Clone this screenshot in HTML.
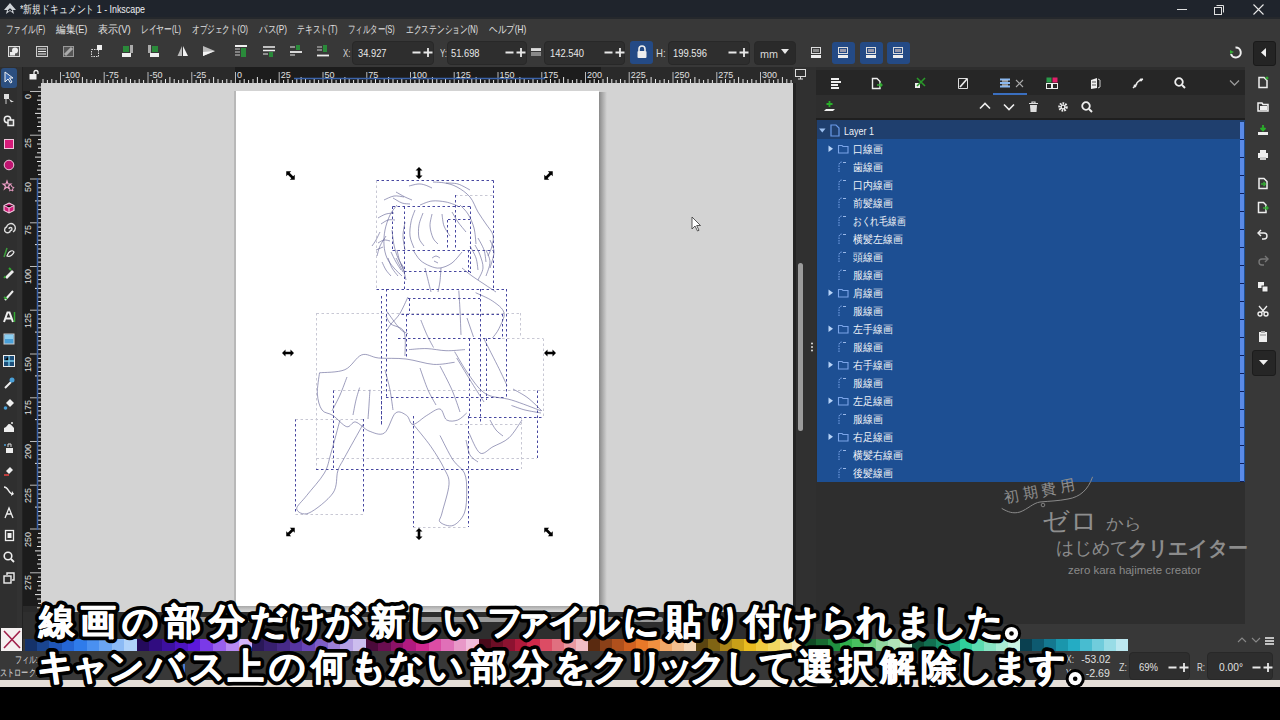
<!DOCTYPE html><html><head><meta charset="utf-8"><style>
*{box-sizing:border-box;margin:0;padding:0}
html,body{width:1280px;height:720px;overflow:hidden;background:#000}
body{position:relative;font-family:"Liberation Sans",sans-serif;color:#ddd}
.a{position:absolute}
.t{position:absolute;white-space:nowrap;line-height:1}
.inp{position:absolute;background:#2e2e2e;border:1px solid #282828;border-radius:4px}
.bbtn{position:absolute;background:#244a85;border-radius:3px}
.sw{position:absolute;top:639px;height:12px}
svg{position:absolute;overflow:visible}
.sub{position:absolute;font-size:38px;font-weight:bold;color:#fff;white-space:nowrap;-webkit-text-stroke:7px #000;paint-order:stroke fill;line-height:1}
</style></head><body>
<div class="a" style="left:0px;top:0px;width:1280px;height:17px;background:#1f242c;"></div>
<div class="a" style="left:0px;top:17px;width:1280px;height:2px;background:#25282c;"></div>
<div class="a" style="left:0px;top:19px;width:1280px;height:48px;background:#383838;"></div>
<div class="a" style="left:0px;top:67px;width:23px;height:572px;background:#2f2f2f;"></div>
<div class="a" style="left:17px;top:67px;width:6px;height:572px;background:#323232;"></div>
<div class="a" style="left:23px;top:67px;width:770px;height:16px;background:#2a2a2a;"></div>
<div class="a" style="left:235px;top:67px;width:366px;height:16px;background:#1c1c1c;"></div>
<div class="a" style="left:23px;top:83px;width:18px;height:529px;background:#2a2a2a;"></div>
<div class="a" style="left:23px;top:91px;width:18px;height:515px;background:#1c1c1c;"></div>
<div class="a" style="left:41px;top:83px;width:752px;height:529px;background:#d3d3d3;"></div>
<div class="a" style="left:234px;top:91px;width:2px;height:515px;background:#b8b8b8;"></div>
<div class="a" style="left:599px;top:92px;width:8px;height:519px;background:linear-gradient(90deg,#8a8a8a,#d3d3d3);"></div>
<div class="a" style="left:236px;top:606px;width:371px;height:5px;background:linear-gradient(180deg,#a8a8a8,#d3d3d3);"></div>
<div class="a" style="left:236px;top:91px;width:363px;height:515px;background:#ffffff;"></div>
<div class="a" style="left:23px;top:612px;width:793px;height:27px;background:#2e2e2e;"></div>
<div class="a" style="left:196px;top:617px;width:467px;height:5px;background:#9a9a9a;border-radius:3px"></div>
<div class="a" style="left:793px;top:67px;width:23px;height:572px;background:#303030;"></div>
<div class="a" style="left:793px;top:83px;width:3px;height:529px;background:#232323;"></div>
<div class="a" style="left:798px;top:263px;width:5px;height:168px;background:#9c9c9c;border-radius:3px"></div>
<div class="a" style="left:816px;top:67px;width:430px;height:557px;background:#2e2e2e;"></div>
<div class="a" style="left:816px;top:70px;width:429px;height:25px;background:#262626;"></div>
<div class="a" style="left:816px;top:95px;width:429px;height:23px;background:#2e2e2e;"></div>
<div class="a" style="left:816px;top:118px;width:429px;height:2px;background:#1f1f1f;"></div>
<div class="a" style="left:817px;top:120px;width:428px;height:19px;background:#1f3f6e;"></div>
<div class="a" style="left:817px;top:139px;width:428px;height:343px;background:#1d4f93;"></div>
<div class="a" style="left:1240px;top:122px;width:4px;height:360px;background:#5a8ae8;"></div>
<div class="a" style="left:816px;top:482px;width:429px;height:142px;background:#2e2e2e;"></div>
<div class="a" style="left:1245px;top:67px;width:35px;height:572px;background:#383838;"></div>
<div class="a" style="left:816px;top:624px;width:429px;height:15px;background:#383838;"></div>
<div class="a" style="left:0px;top:639px;width:1280px;height:12px;background:#383838;"></div>
<div class="a" style="left:0px;top:651px;width:1280px;height:29px;background:#383838;"></div>
<div class="a" style="left:0px;top:680px;width:1280px;height:7px;background:#e6dfd8;"></div>
<div class="a" style="left:0px;top:687px;width:1280px;height:33px;background:#000000;"></div>
<div class="sw" style="left:24.50px;width:12.87px;background:#15326a"></div>
<div class="sw" style="left:36.97px;width:12.87px;background:#1a4590"></div>
<div class="sw" style="left:49.43px;width:12.87px;background:#1f55b5"></div>
<div class="sw" style="left:61.90px;width:12.87px;background:#2566d5"></div>
<div class="sw" style="left:74.37px;width:12.87px;background:#2f7bea"></div>
<div class="sw" style="left:86.83px;width:12.87px;background:#4a90f0"></div>
<div class="sw" style="left:99.30px;width:12.87px;background:#6aa5f2"></div>
<div class="sw" style="left:111.77px;width:12.87px;background:#8cbaf5"></div>
<div class="sw" style="left:124.23px;width:12.87px;background:#b0d2fa"></div>
<div class="sw" style="left:136.70px;width:13.16px;background:#240a5c"></div>
<div class="sw" style="left:149.46px;width:13.16px;background:#300c80"></div>
<div class="sw" style="left:162.21px;width:13.16px;background:#3d10a0"></div>
<div class="sw" style="left:174.97px;width:13.16px;background:#4c14c0"></div>
<div class="sw" style="left:187.72px;width:13.16px;background:#5c18dc"></div>
<div class="sw" style="left:200.48px;width:13.16px;background:#7a3ae8"></div>
<div class="sw" style="left:213.23px;width:13.16px;background:#9a60ee"></div>
<div class="sw" style="left:225.99px;width:13.16px;background:#b88af2"></div>
<div class="sw" style="left:238.74px;width:13.16px;background:#d2b4f8"></div>
<div class="sw" style="left:251.50px;width:13.09px;background:#2a1858"></div>
<div class="sw" style="left:264.19px;width:13.09px;background:#382070"></div>
<div class="sw" style="left:276.88px;width:13.09px;background:#472a88"></div>
<div class="sw" style="left:289.57px;width:13.09px;background:#5635a0"></div>
<div class="sw" style="left:302.26px;width:13.09px;background:#6845b8"></div>
<div class="sw" style="left:314.94px;width:13.09px;background:#7e5ec8"></div>
<div class="sw" style="left:327.63px;width:13.09px;background:#9a7ed6"></div>
<div class="sw" style="left:340.32px;width:13.09px;background:#b49ee2"></div>
<div class="sw" style="left:353.01px;width:13.09px;background:#ccbdee"></div>
<div class="sw" style="left:365.70px;width:12.99px;background:#4a0a3a"></div>
<div class="sw" style="left:378.29px;width:12.99px;background:#6a0e50"></div>
<div class="sw" style="left:390.88px;width:12.99px;background:#8c1268"></div>
<div class="sw" style="left:403.47px;width:12.99px;background:#b01a80"></div>
<div class="sw" style="left:416.06px;width:12.99px;background:#d02890"></div>
<div class="sw" style="left:428.64px;width:12.99px;background:#dc4ca4"></div>
<div class="sw" style="left:441.23px;width:12.99px;background:#e070b8"></div>
<div class="sw" style="left:453.82px;width:12.99px;background:#e898c8"></div>
<div class="sw" style="left:466.41px;width:12.99px;background:#f0bcdc"></div>
<div class="sw" style="left:479.00px;width:12.51px;background:#4a0a1a"></div>
<div class="sw" style="left:491.11px;width:12.51px;background:#6c0e26"></div>
<div class="sw" style="left:503.22px;width:12.51px;background:#8c1230"></div>
<div class="sw" style="left:515.33px;width:12.51px;background:#b01a3c"></div>
<div class="sw" style="left:527.44px;width:12.51px;background:#d0284a"></div>
<div class="sw" style="left:539.56px;width:12.51px;background:#dc4c64"></div>
<div class="sw" style="left:551.67px;width:12.51px;background:#e07080"></div>
<div class="sw" style="left:563.78px;width:12.51px;background:#e898a0"></div>
<div class="sw" style="left:575.89px;width:12.51px;background:#f0bcc4"></div>
<div class="sw" style="left:588.00px;width:12.40px;background:#5a2a10"></div>
<div class="sw" style="left:600.00px;width:12.40px;background:#8a4018"></div>
<div class="sw" style="left:612.00px;width:12.40px;background:#b0501c"></div>
<div class="sw" style="left:624.00px;width:12.40px;background:#d06020"></div>
<div class="sw" style="left:636.00px;width:12.40px;background:#e87828"></div>
<div class="sw" style="left:648.00px;width:12.40px;background:#f09040"></div>
<div class="sw" style="left:660.00px;width:12.40px;background:#f0a868"></div>
<div class="sw" style="left:672.00px;width:12.40px;background:#f2c090"></div>
<div class="sw" style="left:684.00px;width:12.40px;background:#f5d8b8"></div>
<div class="sw" style="left:696.00px;width:12.40px;background:#5a4410"></div>
<div class="sw" style="left:708.00px;width:12.40px;background:#806414"></div>
<div class="sw" style="left:720.00px;width:12.40px;background:#a88418"></div>
<div class="sw" style="left:732.00px;width:12.40px;background:#c8a018"></div>
<div class="sw" style="left:744.00px;width:12.40px;background:#e8bc20"></div>
<div class="sw" style="left:756.00px;width:12.40px;background:#f0cc40"></div>
<div class="sw" style="left:768.00px;width:12.40px;background:#f2d860"></div>
<div class="sw" style="left:780.00px;width:12.40px;background:#f5e090"></div>
<div class="sw" style="left:792.00px;width:12.40px;background:#f8ecc0"></div>
<div class="sw" style="left:804.00px;width:12.40px;background:#104a24"></div>
<div class="sw" style="left:816.00px;width:12.40px;background:#186a30"></div>
<div class="sw" style="left:828.00px;width:12.40px;background:#209040"></div>
<div class="sw" style="left:840.00px;width:12.40px;background:#30b04c"></div>
<div class="sw" style="left:852.00px;width:12.40px;background:#48c060"></div>
<div class="sw" style="left:864.00px;width:12.40px;background:#70cc80"></div>
<div class="sw" style="left:876.00px;width:12.40px;background:#90d8a0"></div>
<div class="sw" style="left:888.00px;width:12.40px;background:#b0e4b8"></div>
<div class="sw" style="left:900.00px;width:12.40px;background:#d0f0d8"></div>
<div class="sw" style="left:912.00px;width:12.40px;background:#0e5038"></div>
<div class="sw" style="left:924.00px;width:12.40px;background:#127050"></div>
<div class="sw" style="left:936.00px;width:12.40px;background:#18906a"></div>
<div class="sw" style="left:948.00px;width:12.40px;background:#20b084"></div>
<div class="sw" style="left:960.00px;width:12.40px;background:#30d09c"></div>
<div class="sw" style="left:972.00px;width:12.40px;background:#5cdcb0"></div>
<div class="sw" style="left:984.00px;width:12.40px;background:#88e4c4"></div>
<div class="sw" style="left:996.00px;width:12.40px;background:#a8ecd4"></div>
<div class="sw" style="left:1008.00px;width:12.40px;background:#c8f4e4"></div>
<div class="sw" style="left:1020.00px;width:12.34px;background:#0a4050"></div>
<div class="sw" style="left:1031.94px;width:12.34px;background:#0e5a70"></div>
<div class="sw" style="left:1043.89px;width:12.34px;background:#147890"></div>
<div class="sw" style="left:1055.83px;width:12.34px;background:#1a96ac"></div>
<div class="sw" style="left:1067.78px;width:12.34px;background:#24acc4"></div>
<div class="sw" style="left:1079.72px;width:12.34px;background:#48bcd0"></div>
<div class="sw" style="left:1091.67px;width:12.34px;background:#70ccdc"></div>
<div class="sw" style="left:1103.61px;width:12.34px;background:#98dce6"></div>
<div class="sw" style="left:1115.56px;width:12.34px;background:#bce8f0"></div>
<div class="a" style="left:1px;top:628px;width:22px;height:23px;background:#f4f0f0"></div>
<svg style="left:1px;top:628px" width="22" height="23"><path d="M3 3L19 20M19 3L3 20" stroke="#a0204a" stroke-width="1.6"/></svg>
<svg style="left:3px;top:2px" width="14" height="14"><path d="M7 1L13 8L10 8L11 12L7 9L3 12L4 8L1 8Z" fill="#cfd3d8"/><path d="M5 9L7 7L9 9" stroke="#1d222a" stroke-width="1.2" fill="none"/></svg>
<div class="a" style="left:1177px;top:9px;width:10px;height:1px;background:#e0e0e0"></div>
<svg style="left:1213px;top:4px" width="12" height="11"><rect x="1.5" y="3.5" width="7" height="7" fill="none" stroke="#e0e0e0"/><path d="M3.5 1.5H10.5V8.5" fill="none" stroke="#e0e0e0"/></svg>
<svg style="left:1253px;top:4px" width="11" height="11"><path d="M0.5 0.5L10.5 10.5M10.5 0.5L0.5 10.5" stroke="#e8e8e8" stroke-width="1.1"/></svg>

<svg style="left:8px;top:46px" width="13" height="12"><rect x="0.5" y="0.5" width="11" height="10" fill="#555" stroke="#ddd"/><circle cx="7" cy="4.5" r="3" fill="#eee"/><rect x="2" y="6" width="5" height="3.5" fill="#eee"/></svg>
<svg style="left:36px;top:46px" width="13" height="12"><rect x="0.5" y="0.5" width="11" height="10" fill="#444" stroke="#ccc"/><path d="M2 3H10M2 5.5H10M2 8H10" stroke="#eee" stroke-width="1.2"/></svg>
<svg style="left:63px;top:46px" width="12" height="12"><rect x="0.5" y="0.5" width="10" height="10" fill="#555" stroke="#999"/><path d="M2 9L9 2" stroke="#aaa" stroke-width="3"/></svg>
<svg style="left:91px;top:45px" width="13" height="13"><rect x="0.5" y="4.5" width="7" height="7" fill="none" stroke="#ddd" stroke-dasharray="1.5 1"/><rect x="6" y="0" width="5" height="5" fill="#f0f0f0"/></svg>
<svg style="left:121px;top:45px" width="14" height="13"><rect x="2" y="1" width="6" height="6" fill="#2a8a3a"/><rect x="9" y="0" width="3" height="8" fill="#aaa"/><rect x="1" y="8" width="9" height="4" fill="#f0f0f0"/></svg>
<svg style="left:146px;top:45px" width="14" height="13"><rect x="2" y="0" width="3" height="8" fill="#aaa"/><rect x="6" y="1" width="6" height="6" fill="#2a8a3a"/><rect x="4" y="8" width="9" height="4" fill="#f0f0f0"/></svg>
<svg style="left:177px;top:45px" width="12" height="13"><path d="M5 1L0.5 11H5Z" fill="#bbb"/><path d="M6 1L11 11H6Z" fill="#f4f4f4"/></svg>
<svg style="left:202px;top:45px" width="14" height="13"><path d="M1 1L13 6L1 11Z" fill="#bbb"/><path d="M1 7L13 6L1 11Z" fill="#f4f4f4"/></svg>
<svg style="left:235px;top:45px" width="13" height="13"><rect x="0" y="0" width="12" height="2" fill="#f0f0f0"/><path d="M0 4H5M0 7H5M0 10H5" stroke="#ccc" stroke-width="1.2"/><rect x="6" y="3" width="5" height="9" fill="#2a8a3a"/></svg>
<svg style="left:263px;top:45px" width="13" height="13"><path d="M0 2H12M0 5.5H12" stroke="#eee" stroke-width="1.6"/><path d="M0 9H5" stroke="#ccc" stroke-width="1.2"/><rect x="6" y="7" width="4" height="5" fill="#2a8a3a"/></svg>
<svg style="left:290px;top:45px" width="13" height="13"><path d="M0 2H5" stroke="#ccc" stroke-width="1.2"/><rect x="6" y="0" width="4" height="5" fill="#2a8a3a"/><path d="M0 7H12" stroke="#eee" stroke-width="1.8"/><path d="M0 10H5" stroke="#ccc" stroke-width="1.2"/></svg>
<svg style="left:317px;top:45px" width="13" height="13"><path d="M0 2H5M0 5H5" stroke="#ccc" stroke-width="1.2"/><rect x="6" y="0" width="4" height="7" fill="#2a8a3a"/><path d="M0 10.5H12" stroke="#eee" stroke-width="1.8"/></svg>

<div class="inp" style="left:352px;top:41px;width:82px;height:24px"></div>
<div class="inp" style="left:447px;top:41px;width:80px;height:24px"></div>
<div class="inp" style="left:544px;top:41px;width:81px;height:24px"></div>
<div class="inp" style="left:668px;top:41px;width:82px;height:24px"></div>
<div class="inp" style="left:754px;top:41px;width:42px;height:24px;background:#2a2a2a"></div>
<div class="bbtn" style="left:630px;top:41px;width:23px;height:23px"></div>
<svg style="left:636px;top:45px" width="12" height="14"><path d="M3 6V4A3 3 0 0 1 9 4V6" fill="none" stroke="#eee" stroke-width="1.6"/><rect x="1.5" y="6" width="9" height="7" rx="1" fill="#eee"/></svg>
<svg style="left:781px;top:49px" width="9" height="6"><path d="M0 0H8L4 5Z" fill="#e8e8e8"/></svg>
<svg style="left:412px;top:47px" width="22" height="11"><path d="M0.5 5.5H8.5M11.5 5.5H20.5M16 1V10" stroke="#e8e8e8" stroke-width="1.8"/></svg>
<svg style="left:505px;top:47px" width="22" height="11"><path d="M0.5 5.5H8.5M11.5 5.5H20.5M16 1V10" stroke="#e8e8e8" stroke-width="1.8"/></svg>
<svg style="left:604px;top:47px" width="22" height="11"><path d="M0.5 5.5H8.5M11.5 5.5H20.5M16 1V10" stroke="#e8e8e8" stroke-width="1.8"/></svg>
<svg style="left:727.5px;top:47px" width="22" height="11"><path d="M0.5 5.5H8.5M11.5 5.5H20.5M16 1V10" stroke="#e8e8e8" stroke-width="1.8"/></svg>
<svg style="left:531px;top:48px" width="11" height="9"><rect x="0" y="0" width="10" height="3" fill="#ccc"/><rect x="0" y="4" width="10" height="4" fill="#888"/><path d="M0 2H10" stroke="#eee"/></svg>
<svg style="left:811px;top:47px" width="11" height="12"><rect x="0.5" y="0.5" width="9" height="6" fill="none" stroke="#ddd"/><rect x="2" y="2" width="6" height="3" fill="#888"/><rect x="0" y="8" width="10" height="3" fill="#eee"/></svg>
<div class="bbtn" style="left:832px;top:42px;width:23px;height:22px"></div>
<svg style="left:838px;top:47px" width="11" height="12"><rect x="0.5" y="0.5" width="9" height="6" fill="none" stroke="#ddd"/><rect x="2" y="2" width="6" height="3" fill="#99a"/><rect x="0" y="8" width="10" height="3" fill="#eee"/></svg>
<div class="bbtn" style="left:860px;top:42px;width:23px;height:22px"></div>
<svg style="left:866px;top:47px" width="11" height="12"><rect x="0.5" y="0.5" width="9" height="6" fill="none" stroke="#ddd"/><rect x="2" y="2" width="6" height="3" fill="#99a"/><rect x="0" y="8" width="10" height="3" fill="#eee"/></svg>
<div class="bbtn" style="left:887px;top:42px;width:23px;height:22px"></div>
<svg style="left:893px;top:47px" width="11" height="12"><rect x="0.5" y="0.5" width="9" height="6" fill="none" stroke="#ddd"/><rect x="2" y="2" width="6" height="3" fill="#99a"/><rect x="0" y="8" width="10" height="3" fill="#eee"/></svg>
<svg style="left:1229px;top:46px" width="14" height="13"><path d="M6.5 1.5A5 5 0 1 1 2 8" fill="none" stroke="#eee" stroke-width="2"/><path d="M1 4L5 6L1 8Z" fill="#3a3"/></svg>
<div class="a" style="left:1253px;top:41px;width:23px;height:25px;background:#242424;border:1px solid #1a1a1a;border-radius:3px"></div>
<svg style="left:1260px;top:48px" width="8" height="10"><path d="M6 0V9L1 4.5Z" fill="#f0f0f0"/></svg>
<div class="a" style="left:1px;top:68px;width:16px;height:20px;background:#2c4f7f;border-radius:3px"></div>
<div class="a" style="left:22px;top:67px;width:1px;height:584px;background:#222"></div>
<svg style="left:3px;top:71px" width="13" height="13"><path d="M2 1L2 11L5 8L7.5 12L9 11L6.5 7L10 7Z" fill="#3b6ab0" stroke="#f0f0f0" stroke-width="1"/></svg>
<svg style="left:3px;top:93px" width="13" height="13"><rect x="1" y="1" width="5" height="5" fill="#ddd"/><path d="M6 6L11 9L8 9L9 11" fill="#ddd"/><path d="M3 6V11" stroke="#ccc"/></svg>
<svg style="left:3px;top:115px" width="13" height="13"><circle cx="4.5" cy="4.5" r="3.2" fill="none" stroke="#eee" stroke-width="1.5"/><rect x="5" y="5" width="5.5" height="5.5" fill="#444" stroke="#eee" stroke-width="1.5"/></svg>
<svg style="left:3px;top:138px" width="13" height="13"><rect x="1.5" y="1.5" width="9" height="9" fill="#d81b7a" stroke="#f0c8dc" stroke-width="1"/></svg>
<svg style="left:3px;top:159px" width="13" height="13"><circle cx="6" cy="6" r="4.8" fill="#c01470" stroke="#f0c8dc" stroke-width="1"/></svg>
<svg style="left:3px;top:180px" width="13" height="13"><path d="M4 1L5 4L8 4L5.5 6L6.5 9L4 7L1.5 9L2.5 6L0 4L3 4Z" fill="none" stroke="#f0a0c8" stroke-width="1.1"/><path d="M8 5L9 7L11 7.5L9.5 9L10 11L8 10L6 11" fill="none" stroke="#f0a0c8" stroke-width="1"/></svg>
<svg style="left:3px;top:202px" width="13" height="13"><path d="M6 1L11 3.5V8.5L6 11L1 8.5V3.5Z" fill="#d01a78" stroke="#f4d0e4" stroke-width="1.1"/><path d="M1 3.5L6 6L11 3.5M6 6V11" stroke="#f4d0e4" stroke-width="1"/></svg>
<svg style="left:3px;top:223px" width="13" height="13"><path d="M6 6A1.5 1.5 0 1 1 7.5 7.5A3 3 0 1 1 3.5 4A4.5 4.5 0 1 1 10 9" fill="none" stroke="#ddd" stroke-width="1.4"/></svg>
<svg style="left:3px;top:247px" width="13" height="13"><path d="M1 10L4 1" stroke="#3fa03f" stroke-width="1.5"/><path d="M4 9C6 3 10 3 11 5C10 8 7 10 4 9Z" fill="none" stroke="#eee" stroke-width="1.2"/></svg>
<svg style="left:3px;top:267px" width="13" height="13"><path d="M2 10L9 3L11 5L4 12Z" fill="#eee"/><path d="M1 11L2.5 9" stroke="#3a3" stroke-width="1.5"/><path d="M6 1L8 3" stroke="#3a3" stroke-width="2"/></svg>
<svg style="left:3px;top:289px" width="13" height="13"><path d="M2 11L10 2" stroke="#eee" stroke-width="2"/><path d="M1 8L4 10" stroke="#3a3" stroke-width="2"/></svg>
<svg style="left:3px;top:311px" width="13" height="13"><path d="M1 11L4.5 1.5H6.5L10 11M2.8 7.5H8.3" fill="none" stroke="#f0f0f0" stroke-width="2"/><path d="M11.5 1V11" stroke="#3a3" stroke-width="1.5"/></svg>
<svg style="left:3px;top:333px" width="13" height="13"><rect x="1" y="1" width="10" height="10" fill="#4aa0d8" stroke="#ccc"/><rect x="2" y="2" width="8" height="4" fill="#8ccff0"/></svg>
<svg style="left:3px;top:355px" width="13" height="13"><rect x="0.5" y="0.5" width="11" height="11" fill="#1d4f7a" stroke="#eee"/><path d="M6 1V6H1M6 6H11M6 6V11" stroke="#7ad0f0" stroke-width="1.3"/></svg>
<svg style="left:3px;top:377px" width="13" height="13"><path d="M2 11L8 5" stroke="#eee" stroke-width="2"/><circle cx="9" cy="3" r="2.5" fill="#4aa0d8"/></svg>
<svg style="left:3px;top:398px" width="13" height="13"><path d="M3 5L7 1L11 5L7 9Z" fill="#eee"/><circle cx="2.5" cy="10" r="1.8" fill="#4aa0d8"/></svg>
<svg style="left:3px;top:421px" width="13" height="13"><path d="M1 11H11V7C9 5 8 3 6 3C5 3 4 5 3 6L1 7Z" fill="#eee"/><circle cx="9" cy="2" r="1" fill="#eee"/></svg>
<svg style="left:3px;top:442px" width="13" height="13"><path d="M3 11H10V6H3Z" fill="#eee"/><path d="M5 5V2H8V5" stroke="#ddd" fill="none"/><circle cx="2" cy="3" r="1" fill="#4aa0d8"/></svg>
<svg style="left:3px;top:464px" width="13" height="13"><path d="M3 7L7 3L10 6L6 10Z" fill="#eee"/><path d="M1 11H6" stroke="#e44" stroke-width="1.5"/></svg>
<svg style="left:3px;top:485px" width="13" height="13"><path d="M1 2C6 2 5 9 10 9" fill="none" stroke="#eee" stroke-width="1.5"/><path d="M9 6L11 9L8 11Z" fill="#eee"/></svg>
<svg style="left:3px;top:507px" width="13" height="13"><path d="M2 11L6 1L10 11M4 7H8" fill="none" stroke="#eee" stroke-width="1.3"/></svg>
<svg style="left:3px;top:529px" width="13" height="13"><rect x="2.5" y="1.5" width="8" height="10" fill="none" stroke="#eee" stroke-width="1.3"/><rect x="4.5" y="4" width="4" height="5" fill="#eee"/></svg>
<svg style="left:3px;top:551px" width="13" height="13"><circle cx="5" cy="5" r="3.8" fill="none" stroke="#eee" stroke-width="1.6"/><path d="M8 8L11 11" stroke="#eee" stroke-width="1.8"/></svg>
<svg style="left:3px;top:572px" width="13" height="13"><rect x="1" y="4" width="7" height="7" fill="none" stroke="#eee" stroke-width="1.4"/><path d="M4 3V1H11V8H9" fill="none" stroke="#eee" stroke-width="1.4"/></svg>
<svg style="left:29px;top:70px" width="11" height="10"><rect x="0.5" y="4" width="7" height="5.5" fill="#f0f0f0"/><path d="M5 4V2.5A2 2 0 0 1 9 2.5V4" fill="none" stroke="#f0f0f0" stroke-width="1.3"/></svg>
<svg style="left:0;top:0" width="1280" height="720"><path d="M43.0 79V83" stroke="#e8e8e8" stroke-width="1"/><path d="M47.4 80V83" stroke="#e8e8e8" stroke-width="1"/><path d="M51.8 79V83" stroke="#e8e8e8" stroke-width="1"/><path d="M56.1 80V83" stroke="#e8e8e8" stroke-width="1"/><path d="M60.5 72V83" stroke="#bbbbbb" stroke-width="1"/><path d="M64.9 80V83" stroke="#e8e8e8" stroke-width="1"/><path d="M69.2 79V83" stroke="#e8e8e8" stroke-width="1"/><path d="M73.6 80V83" stroke="#e8e8e8" stroke-width="1"/><path d="M78.0 79V83" stroke="#e8e8e8" stroke-width="1"/><path d="M82.4 77V83" stroke="#e8e8e8" stroke-width="1"/><path d="M86.8 79V83" stroke="#e8e8e8" stroke-width="1"/><path d="M91.1 80V83" stroke="#e8e8e8" stroke-width="1"/><path d="M95.5 79V83" stroke="#e8e8e8" stroke-width="1"/><path d="M99.9 80V83" stroke="#e8e8e8" stroke-width="1"/><path d="M104.2 72V83" stroke="#bbbbbb" stroke-width="1"/><path d="M108.6 80V83" stroke="#e8e8e8" stroke-width="1"/><path d="M113.0 79V83" stroke="#e8e8e8" stroke-width="1"/><path d="M117.4 80V83" stroke="#e8e8e8" stroke-width="1"/><path d="M121.8 79V83" stroke="#e8e8e8" stroke-width="1"/><path d="M126.1 77V83" stroke="#e8e8e8" stroke-width="1"/><path d="M130.5 79V83" stroke="#e8e8e8" stroke-width="1"/><path d="M134.9 80V83" stroke="#e8e8e8" stroke-width="1"/><path d="M139.2 79V83" stroke="#e8e8e8" stroke-width="1"/><path d="M143.6 80V83" stroke="#e8e8e8" stroke-width="1"/><path d="M148.0 72V83" stroke="#bbbbbb" stroke-width="1"/><path d="M152.4 80V83" stroke="#e8e8e8" stroke-width="1"/><path d="M156.8 79V83" stroke="#e8e8e8" stroke-width="1"/><path d="M161.1 80V83" stroke="#e8e8e8" stroke-width="1"/><path d="M165.5 79V83" stroke="#e8e8e8" stroke-width="1"/><path d="M169.9 77V83" stroke="#e8e8e8" stroke-width="1"/><path d="M174.2 79V83" stroke="#e8e8e8" stroke-width="1"/><path d="M178.6 80V83" stroke="#e8e8e8" stroke-width="1"/><path d="M183.0 79V83" stroke="#e8e8e8" stroke-width="1"/><path d="M187.4 80V83" stroke="#e8e8e8" stroke-width="1"/><path d="M191.8 72V83" stroke="#bbbbbb" stroke-width="1"/><path d="M196.1 80V83" stroke="#e8e8e8" stroke-width="1"/><path d="M200.5 79V83" stroke="#e8e8e8" stroke-width="1"/><path d="M204.9 80V83" stroke="#e8e8e8" stroke-width="1"/><path d="M209.2 79V83" stroke="#e8e8e8" stroke-width="1"/><path d="M213.6 77V83" stroke="#e8e8e8" stroke-width="1"/><path d="M218.0 79V83" stroke="#e8e8e8" stroke-width="1"/><path d="M222.4 80V83" stroke="#e8e8e8" stroke-width="1"/><path d="M226.8 79V83" stroke="#e8e8e8" stroke-width="1"/><path d="M231.1 80V83" stroke="#e8e8e8" stroke-width="1"/><path d="M235.5 72V83" stroke="#bbbbbb" stroke-width="1"/><path d="M239.9 80V83" stroke="#e8e8e8" stroke-width="1"/><path d="M244.2 79V83" stroke="#e8e8e8" stroke-width="1"/><path d="M248.6 80V83" stroke="#e8e8e8" stroke-width="1"/><path d="M253.0 79V83" stroke="#e8e8e8" stroke-width="1"/><path d="M257.4 77V83" stroke="#e8e8e8" stroke-width="1"/><path d="M261.8 79V83" stroke="#e8e8e8" stroke-width="1"/><path d="M266.1 80V83" stroke="#e8e8e8" stroke-width="1"/><path d="M270.5 79V83" stroke="#e8e8e8" stroke-width="1"/><path d="M274.9 80V83" stroke="#e8e8e8" stroke-width="1"/><path d="M279.2 72V83" stroke="#bbbbbb" stroke-width="1"/><path d="M283.6 80V83" stroke="#e8e8e8" stroke-width="1"/><path d="M288.0 79V83" stroke="#e8e8e8" stroke-width="1"/><path d="M292.4 80V83" stroke="#e8e8e8" stroke-width="1"/><path d="M296.8 79V83" stroke="#e8e8e8" stroke-width="1"/><path d="M301.1 77V83" stroke="#e8e8e8" stroke-width="1"/><path d="M305.5 79V83" stroke="#e8e8e8" stroke-width="1"/><path d="M309.9 80V83" stroke="#e8e8e8" stroke-width="1"/><path d="M314.2 79V83" stroke="#e8e8e8" stroke-width="1"/><path d="M318.6 80V83" stroke="#e8e8e8" stroke-width="1"/><path d="M323.0 72V83" stroke="#bbbbbb" stroke-width="1"/><path d="M327.4 80V83" stroke="#e8e8e8" stroke-width="1"/><path d="M331.8 79V83" stroke="#e8e8e8" stroke-width="1"/><path d="M336.1 80V83" stroke="#e8e8e8" stroke-width="1"/><path d="M340.5 79V83" stroke="#e8e8e8" stroke-width="1"/><path d="M344.9 77V83" stroke="#e8e8e8" stroke-width="1"/><path d="M349.2 79V83" stroke="#e8e8e8" stroke-width="1"/><path d="M353.6 80V83" stroke="#e8e8e8" stroke-width="1"/><path d="M358.0 79V83" stroke="#e8e8e8" stroke-width="1"/><path d="M362.4 80V83" stroke="#e8e8e8" stroke-width="1"/><path d="M366.8 72V83" stroke="#bbbbbb" stroke-width="1"/><path d="M371.1 80V83" stroke="#e8e8e8" stroke-width="1"/><path d="M375.5 79V83" stroke="#e8e8e8" stroke-width="1"/><path d="M379.9 80V83" stroke="#e8e8e8" stroke-width="1"/><path d="M384.2 79V83" stroke="#e8e8e8" stroke-width="1"/><path d="M388.6 77V83" stroke="#e8e8e8" stroke-width="1"/><path d="M393.0 79V83" stroke="#e8e8e8" stroke-width="1"/><path d="M397.4 80V83" stroke="#e8e8e8" stroke-width="1"/><path d="M401.8 79V83" stroke="#e8e8e8" stroke-width="1"/><path d="M406.1 80V83" stroke="#e8e8e8" stroke-width="1"/><path d="M410.5 72V83" stroke="#bbbbbb" stroke-width="1"/><path d="M414.9 80V83" stroke="#e8e8e8" stroke-width="1"/><path d="M419.2 79V83" stroke="#e8e8e8" stroke-width="1"/><path d="M423.6 80V83" stroke="#e8e8e8" stroke-width="1"/><path d="M428.0 79V83" stroke="#e8e8e8" stroke-width="1"/><path d="M432.4 77V83" stroke="#e8e8e8" stroke-width="1"/><path d="M436.8 79V83" stroke="#e8e8e8" stroke-width="1"/><path d="M441.1 80V83" stroke="#e8e8e8" stroke-width="1"/><path d="M445.5 79V83" stroke="#e8e8e8" stroke-width="1"/><path d="M449.9 80V83" stroke="#e8e8e8" stroke-width="1"/><path d="M454.2 72V83" stroke="#bbbbbb" stroke-width="1"/><path d="M458.6 80V83" stroke="#e8e8e8" stroke-width="1"/><path d="M463.0 79V83" stroke="#e8e8e8" stroke-width="1"/><path d="M467.4 80V83" stroke="#e8e8e8" stroke-width="1"/><path d="M471.8 79V83" stroke="#e8e8e8" stroke-width="1"/><path d="M476.1 77V83" stroke="#e8e8e8" stroke-width="1"/><path d="M480.5 79V83" stroke="#e8e8e8" stroke-width="1"/><path d="M484.9 80V83" stroke="#e8e8e8" stroke-width="1"/><path d="M489.2 79V83" stroke="#e8e8e8" stroke-width="1"/><path d="M493.6 80V83" stroke="#e8e8e8" stroke-width="1"/><path d="M498.0 72V83" stroke="#bbbbbb" stroke-width="1"/><path d="M502.4 80V83" stroke="#e8e8e8" stroke-width="1"/><path d="M506.8 79V83" stroke="#e8e8e8" stroke-width="1"/><path d="M511.1 80V83" stroke="#e8e8e8" stroke-width="1"/><path d="M515.5 79V83" stroke="#e8e8e8" stroke-width="1"/><path d="M519.9 77V83" stroke="#e8e8e8" stroke-width="1"/><path d="M524.2 79V83" stroke="#e8e8e8" stroke-width="1"/><path d="M528.6 80V83" stroke="#e8e8e8" stroke-width="1"/><path d="M533.0 79V83" stroke="#e8e8e8" stroke-width="1"/><path d="M537.4 80V83" stroke="#e8e8e8" stroke-width="1"/><path d="M541.8 72V83" stroke="#bbbbbb" stroke-width="1"/><path d="M546.1 80V83" stroke="#e8e8e8" stroke-width="1"/><path d="M550.5 79V83" stroke="#e8e8e8" stroke-width="1"/><path d="M554.9 80V83" stroke="#e8e8e8" stroke-width="1"/><path d="M559.2 79V83" stroke="#e8e8e8" stroke-width="1"/><path d="M563.6 77V83" stroke="#e8e8e8" stroke-width="1"/><path d="M568.0 79V83" stroke="#e8e8e8" stroke-width="1"/><path d="M572.4 80V83" stroke="#e8e8e8" stroke-width="1"/><path d="M576.8 79V83" stroke="#e8e8e8" stroke-width="1"/><path d="M581.1 80V83" stroke="#e8e8e8" stroke-width="1"/><path d="M585.5 72V83" stroke="#bbbbbb" stroke-width="1"/><path d="M589.9 80V83" stroke="#e8e8e8" stroke-width="1"/><path d="M594.2 79V83" stroke="#e8e8e8" stroke-width="1"/><path d="M598.6 80V83" stroke="#e8e8e8" stroke-width="1"/><path d="M603.0 79V83" stroke="#e8e8e8" stroke-width="1"/><path d="M607.4 77V83" stroke="#e8e8e8" stroke-width="1"/><path d="M611.8 79V83" stroke="#e8e8e8" stroke-width="1"/><path d="M616.1 80V83" stroke="#e8e8e8" stroke-width="1"/><path d="M620.5 79V83" stroke="#e8e8e8" stroke-width="1"/><path d="M624.9 80V83" stroke="#e8e8e8" stroke-width="1"/><path d="M629.2 72V83" stroke="#bbbbbb" stroke-width="1"/><path d="M633.6 80V83" stroke="#e8e8e8" stroke-width="1"/><path d="M638.0 79V83" stroke="#e8e8e8" stroke-width="1"/><path d="M642.4 80V83" stroke="#e8e8e8" stroke-width="1"/><path d="M646.8 79V83" stroke="#e8e8e8" stroke-width="1"/><path d="M651.1 77V83" stroke="#e8e8e8" stroke-width="1"/><path d="M655.5 79V83" stroke="#e8e8e8" stroke-width="1"/><path d="M659.9 80V83" stroke="#e8e8e8" stroke-width="1"/><path d="M664.2 79V83" stroke="#e8e8e8" stroke-width="1"/><path d="M668.6 80V83" stroke="#e8e8e8" stroke-width="1"/><path d="M673.0 72V83" stroke="#bbbbbb" stroke-width="1"/><path d="M677.4 80V83" stroke="#e8e8e8" stroke-width="1"/><path d="M681.8 79V83" stroke="#e8e8e8" stroke-width="1"/><path d="M686.1 80V83" stroke="#e8e8e8" stroke-width="1"/><path d="M690.5 79V83" stroke="#e8e8e8" stroke-width="1"/><path d="M694.9 77V83" stroke="#e8e8e8" stroke-width="1"/><path d="M699.2 79V83" stroke="#e8e8e8" stroke-width="1"/><path d="M703.6 80V83" stroke="#e8e8e8" stroke-width="1"/><path d="M708.0 79V83" stroke="#e8e8e8" stroke-width="1"/><path d="M712.4 80V83" stroke="#e8e8e8" stroke-width="1"/><path d="M716.8 72V83" stroke="#bbbbbb" stroke-width="1"/><path d="M721.1 80V83" stroke="#e8e8e8" stroke-width="1"/><path d="M725.5 79V83" stroke="#e8e8e8" stroke-width="1"/><path d="M729.9 80V83" stroke="#e8e8e8" stroke-width="1"/><path d="M734.2 79V83" stroke="#e8e8e8" stroke-width="1"/><path d="M738.6 77V83" stroke="#e8e8e8" stroke-width="1"/><path d="M743.0 79V83" stroke="#e8e8e8" stroke-width="1"/><path d="M747.4 80V83" stroke="#e8e8e8" stroke-width="1"/><path d="M751.8 79V83" stroke="#e8e8e8" stroke-width="1"/><path d="M756.1 80V83" stroke="#e8e8e8" stroke-width="1"/><path d="M760.5 72V83" stroke="#bbbbbb" stroke-width="1"/><path d="M764.9 80V83" stroke="#e8e8e8" stroke-width="1"/><path d="M769.2 79V83" stroke="#e8e8e8" stroke-width="1"/><path d="M773.6 80V83" stroke="#e8e8e8" stroke-width="1"/><path d="M778.0 79V83" stroke="#e8e8e8" stroke-width="1"/><path d="M782.4 77V83" stroke="#e8e8e8" stroke-width="1"/><path d="M786.8 79V83" stroke="#e8e8e8" stroke-width="1"/><path d="M791.1 80V83" stroke="#e8e8e8" stroke-width="1"/><path d="M38 87.1H41" stroke="#e8e8e8" stroke-width="1"/><path d="M30 91.5H41" stroke="#bbbbbb" stroke-width="1"/><path d="M38 95.9H41" stroke="#e8e8e8" stroke-width="1"/><path d="M37 100.2H41" stroke="#e8e8e8" stroke-width="1"/><path d="M38 104.6H41" stroke="#e8e8e8" stroke-width="1"/><path d="M37 109.0H41" stroke="#e8e8e8" stroke-width="1"/><path d="M35 113.4H41" stroke="#e8e8e8" stroke-width="1"/><path d="M37 117.8H41" stroke="#e8e8e8" stroke-width="1"/><path d="M38 122.1H41" stroke="#e8e8e8" stroke-width="1"/><path d="M37 126.5H41" stroke="#e8e8e8" stroke-width="1"/><path d="M38 130.9H41" stroke="#e8e8e8" stroke-width="1"/><path d="M30 135.2H41" stroke="#bbbbbb" stroke-width="1"/><path d="M38 139.6H41" stroke="#e8e8e8" stroke-width="1"/><path d="M37 144.0H41" stroke="#e8e8e8" stroke-width="1"/><path d="M38 148.4H41" stroke="#e8e8e8" stroke-width="1"/><path d="M37 152.8H41" stroke="#e8e8e8" stroke-width="1"/><path d="M35 157.1H41" stroke="#e8e8e8" stroke-width="1"/><path d="M37 161.5H41" stroke="#e8e8e8" stroke-width="1"/><path d="M38 165.9H41" stroke="#e8e8e8" stroke-width="1"/><path d="M37 170.2H41" stroke="#e8e8e8" stroke-width="1"/><path d="M38 174.6H41" stroke="#e8e8e8" stroke-width="1"/><path d="M30 179.0H41" stroke="#bbbbbb" stroke-width="1"/><path d="M38 183.4H41" stroke="#e8e8e8" stroke-width="1"/><path d="M37 187.8H41" stroke="#e8e8e8" stroke-width="1"/><path d="M38 192.1H41" stroke="#e8e8e8" stroke-width="1"/><path d="M37 196.5H41" stroke="#e8e8e8" stroke-width="1"/><path d="M35 200.9H41" stroke="#e8e8e8" stroke-width="1"/><path d="M37 205.2H41" stroke="#e8e8e8" stroke-width="1"/><path d="M38 209.6H41" stroke="#e8e8e8" stroke-width="1"/><path d="M37 214.0H41" stroke="#e8e8e8" stroke-width="1"/><path d="M38 218.4H41" stroke="#e8e8e8" stroke-width="1"/><path d="M30 222.8H41" stroke="#bbbbbb" stroke-width="1"/><path d="M38 227.1H41" stroke="#e8e8e8" stroke-width="1"/><path d="M37 231.5H41" stroke="#e8e8e8" stroke-width="1"/><path d="M38 235.9H41" stroke="#e8e8e8" stroke-width="1"/><path d="M37 240.2H41" stroke="#e8e8e8" stroke-width="1"/><path d="M35 244.6H41" stroke="#e8e8e8" stroke-width="1"/><path d="M37 249.0H41" stroke="#e8e8e8" stroke-width="1"/><path d="M38 253.4H41" stroke="#e8e8e8" stroke-width="1"/><path d="M37 257.8H41" stroke="#e8e8e8" stroke-width="1"/><path d="M38 262.1H41" stroke="#e8e8e8" stroke-width="1"/><path d="M30 266.5H41" stroke="#bbbbbb" stroke-width="1"/><path d="M38 270.9H41" stroke="#e8e8e8" stroke-width="1"/><path d="M37 275.2H41" stroke="#e8e8e8" stroke-width="1"/><path d="M38 279.6H41" stroke="#e8e8e8" stroke-width="1"/><path d="M37 284.0H41" stroke="#e8e8e8" stroke-width="1"/><path d="M35 288.4H41" stroke="#e8e8e8" stroke-width="1"/><path d="M37 292.8H41" stroke="#e8e8e8" stroke-width="1"/><path d="M38 297.1H41" stroke="#e8e8e8" stroke-width="1"/><path d="M37 301.5H41" stroke="#e8e8e8" stroke-width="1"/><path d="M38 305.9H41" stroke="#e8e8e8" stroke-width="1"/><path d="M30 310.2H41" stroke="#bbbbbb" stroke-width="1"/><path d="M38 314.6H41" stroke="#e8e8e8" stroke-width="1"/><path d="M37 319.0H41" stroke="#e8e8e8" stroke-width="1"/><path d="M38 323.4H41" stroke="#e8e8e8" stroke-width="1"/><path d="M37 327.8H41" stroke="#e8e8e8" stroke-width="1"/><path d="M35 332.1H41" stroke="#e8e8e8" stroke-width="1"/><path d="M37 336.5H41" stroke="#e8e8e8" stroke-width="1"/><path d="M38 340.9H41" stroke="#e8e8e8" stroke-width="1"/><path d="M37 345.2H41" stroke="#e8e8e8" stroke-width="1"/><path d="M38 349.6H41" stroke="#e8e8e8" stroke-width="1"/><path d="M30 354.0H41" stroke="#bbbbbb" stroke-width="1"/><path d="M38 358.4H41" stroke="#e8e8e8" stroke-width="1"/><path d="M37 362.8H41" stroke="#e8e8e8" stroke-width="1"/><path d="M38 367.1H41" stroke="#e8e8e8" stroke-width="1"/><path d="M37 371.5H41" stroke="#e8e8e8" stroke-width="1"/><path d="M35 375.9H41" stroke="#e8e8e8" stroke-width="1"/><path d="M37 380.2H41" stroke="#e8e8e8" stroke-width="1"/><path d="M38 384.6H41" stroke="#e8e8e8" stroke-width="1"/><path d="M37 389.0H41" stroke="#e8e8e8" stroke-width="1"/><path d="M38 393.4H41" stroke="#e8e8e8" stroke-width="1"/><path d="M30 397.8H41" stroke="#bbbbbb" stroke-width="1"/><path d="M38 402.1H41" stroke="#e8e8e8" stroke-width="1"/><path d="M37 406.5H41" stroke="#e8e8e8" stroke-width="1"/><path d="M38 410.9H41" stroke="#e8e8e8" stroke-width="1"/><path d="M37 415.2H41" stroke="#e8e8e8" stroke-width="1"/><path d="M35 419.6H41" stroke="#e8e8e8" stroke-width="1"/><path d="M37 424.0H41" stroke="#e8e8e8" stroke-width="1"/><path d="M38 428.4H41" stroke="#e8e8e8" stroke-width="1"/><path d="M37 432.8H41" stroke="#e8e8e8" stroke-width="1"/><path d="M38 437.1H41" stroke="#e8e8e8" stroke-width="1"/><path d="M30 441.5H41" stroke="#bbbbbb" stroke-width="1"/><path d="M38 445.9H41" stroke="#e8e8e8" stroke-width="1"/><path d="M37 450.2H41" stroke="#e8e8e8" stroke-width="1"/><path d="M38 454.6H41" stroke="#e8e8e8" stroke-width="1"/><path d="M37 459.0H41" stroke="#e8e8e8" stroke-width="1"/><path d="M35 463.4H41" stroke="#e8e8e8" stroke-width="1"/><path d="M37 467.8H41" stroke="#e8e8e8" stroke-width="1"/><path d="M38 472.1H41" stroke="#e8e8e8" stroke-width="1"/><path d="M37 476.5H41" stroke="#e8e8e8" stroke-width="1"/><path d="M38 480.9H41" stroke="#e8e8e8" stroke-width="1"/><path d="M30 485.2H41" stroke="#bbbbbb" stroke-width="1"/><path d="M38 489.6H41" stroke="#e8e8e8" stroke-width="1"/><path d="M37 494.0H41" stroke="#e8e8e8" stroke-width="1"/><path d="M38 498.4H41" stroke="#e8e8e8" stroke-width="1"/><path d="M37 502.8H41" stroke="#e8e8e8" stroke-width="1"/><path d="M35 507.1H41" stroke="#e8e8e8" stroke-width="1"/><path d="M37 511.5H41" stroke="#e8e8e8" stroke-width="1"/><path d="M38 515.9H41" stroke="#e8e8e8" stroke-width="1"/><path d="M37 520.2H41" stroke="#e8e8e8" stroke-width="1"/><path d="M38 524.6H41" stroke="#e8e8e8" stroke-width="1"/><path d="M30 529.0H41" stroke="#bbbbbb" stroke-width="1"/><path d="M38 533.4H41" stroke="#e8e8e8" stroke-width="1"/><path d="M37 537.8H41" stroke="#e8e8e8" stroke-width="1"/><path d="M38 542.1H41" stroke="#e8e8e8" stroke-width="1"/><path d="M37 546.5H41" stroke="#e8e8e8" stroke-width="1"/><path d="M35 550.9H41" stroke="#e8e8e8" stroke-width="1"/><path d="M37 555.2H41" stroke="#e8e8e8" stroke-width="1"/><path d="M38 559.6H41" stroke="#e8e8e8" stroke-width="1"/><path d="M37 564.0H41" stroke="#e8e8e8" stroke-width="1"/><path d="M38 568.4H41" stroke="#e8e8e8" stroke-width="1"/><path d="M30 572.8H41" stroke="#bbbbbb" stroke-width="1"/><path d="M38 577.1H41" stroke="#e8e8e8" stroke-width="1"/><path d="M37 581.5H41" stroke="#e8e8e8" stroke-width="1"/><path d="M38 585.9H41" stroke="#e8e8e8" stroke-width="1"/><path d="M37 590.2H41" stroke="#e8e8e8" stroke-width="1"/><path d="M35 594.6H41" stroke="#e8e8e8" stroke-width="1"/><path d="M37 599.0H41" stroke="#e8e8e8" stroke-width="1"/><path d="M38 603.4H41" stroke="#e8e8e8" stroke-width="1"/><path d="M37 607.8H41" stroke="#e8e8e8" stroke-width="1"/><path d="M38 612.1H41" stroke="#e8e8e8" stroke-width="1"/><path d="M294 78.5H545" stroke="#3a62a8" stroke-width="1.5"/><path d="M37.5 178V530" stroke="#3a62a8" stroke-width="1.5"/></svg>
<div class="t" style="left:24px;top:93.0px;font-size:9px;color:#e0e0e0;transform-origin:0 0;transform:translate(0px,6px) rotate(-90deg)">0</div>
<div class="t" style="left:24px;top:136.75px;font-size:9px;color:#e0e0e0;transform-origin:0 0;transform:translate(0px,11px) rotate(-90deg)">25</div>
<div class="t" style="left:24px;top:180.5px;font-size:9px;color:#e0e0e0;transform-origin:0 0;transform:translate(0px,11px) rotate(-90deg)">50</div>
<div class="t" style="left:24px;top:224.25px;font-size:9px;color:#e0e0e0;transform-origin:0 0;transform:translate(0px,11px) rotate(-90deg)">75</div>
<div class="t" style="left:24px;top:268.0px;font-size:9px;color:#e0e0e0;transform-origin:0 0;transform:translate(0px,16px) rotate(-90deg)">100</div>
<div class="t" style="left:24px;top:311.75px;font-size:9px;color:#e0e0e0;transform-origin:0 0;transform:translate(0px,16px) rotate(-90deg)">125</div>
<div class="t" style="left:24px;top:355.5px;font-size:9px;color:#e0e0e0;transform-origin:0 0;transform:translate(0px,16px) rotate(-90deg)">150</div>
<div class="t" style="left:24px;top:399.25px;font-size:9px;color:#e0e0e0;transform-origin:0 0;transform:translate(0px,16px) rotate(-90deg)">175</div>
<div class="t" style="left:24px;top:443.0px;font-size:9px;color:#e0e0e0;transform-origin:0 0;transform:translate(0px,16px) rotate(-90deg)">200</div>
<div class="t" style="left:24px;top:486.75px;font-size:9px;color:#e0e0e0;transform-origin:0 0;transform:translate(0px,16px) rotate(-90deg)">225</div>
<div class="t" style="left:24px;top:530.5px;font-size:9px;color:#e0e0e0;transform-origin:0 0;transform:translate(0px,16px) rotate(-90deg)">250</div>
<div class="t" style="left:24px;top:574.25px;font-size:9px;color:#e0e0e0;transform-origin:0 0;transform:translate(0px,16px) rotate(-90deg)">275</div>
<svg style="left:0;top:0" width="1280" height="720"><path d="M376.5 180.5H493.5" fill="none" stroke="#4646a0" stroke-width="1" stroke-dasharray="2.5 2.5"/><path d="M493.5 180.5V289" fill="none" stroke="#4646a0" stroke-width="1" stroke-dasharray="2.5 2.5"/><path d="M376.5 180.5V289" fill="none" stroke="#c8c8d4" stroke-width="1" stroke-dasharray="2.5 2.5"/><path d="M455 195.5H493" fill="none" stroke="#c8c8d4" stroke-width="1" stroke-dasharray="2.5 2.5"/><path d="M455.5 195V249" fill="none" stroke="#4646a0" stroke-width="1" stroke-dasharray="2.5 2.5"/><path d="M392.5 206.5H470" fill="none" stroke="#4646a0" stroke-width="1" stroke-dasharray="2.5 2.5"/><path d="M392.5 206.5V250" fill="none" stroke="#4646a0" stroke-width="1" stroke-dasharray="2.5 2.5"/><path d="M404.5 206.5V290" fill="none" stroke="#4646a0" stroke-width="1" stroke-dasharray="2.5 2.5"/><path d="M448 219.5H470" fill="none" stroke="#4646a0" stroke-width="1" stroke-dasharray="2.5 2.5"/><path d="M470.5 206.5V273" fill="none" stroke="#4646a0" stroke-width="1" stroke-dasharray="2.5 2.5"/><path d="M447.5 220V250" fill="none" stroke="#4646a0" stroke-width="1" stroke-dasharray="2.5 2.5"/><path d="M392.5 250.5H493.5" fill="none" stroke="#4646a0" stroke-width="1" stroke-dasharray="2.5 2.5"/><path d="M404 271.5H470" fill="none" stroke="#4646a0" stroke-width="1" stroke-dasharray="2.5 2.5"/><path d="M468.5 250V272" fill="none" stroke="#4646a0" stroke-width="1" stroke-dasharray="2.5 2.5"/><path d="M376.5 289.5H506" fill="none" stroke="#4646a0" stroke-width="1" stroke-dasharray="2.5 2.5"/><path d="M506.5 289V397.5" fill="none" stroke="#4646a0" stroke-width="1" stroke-dasharray="2.5 2.5"/><path d="M386.5 289V397.5" fill="none" stroke="#4646a0" stroke-width="1" stroke-dasharray="2.5 2.5"/><path d="M381.5 296V425" fill="none" stroke="#4646a0" stroke-width="1" stroke-dasharray="2.5 2.5"/><path d="M408 298.5H480" fill="none" stroke="#4646a0" stroke-width="1" stroke-dasharray="2.5 2.5"/><path d="M480.5 289V425" fill="none" stroke="#4646a0" stroke-width="1" stroke-dasharray="2.5 2.5"/><path d="M401.5 314.5H503" fill="none" stroke="#4646a0" stroke-width="1" stroke-dasharray="2.5 2.5"/><path d="M398 338.5H502" fill="none" stroke="#4646a0" stroke-width="1" stroke-dasharray="2.5 2.5"/><path d="M406.5 314V358" fill="none" stroke="#4646a0" stroke-width="1" stroke-dasharray="2.5 2.5"/><path d="M469.5 338.5V417" fill="none" stroke="#4646a0" stroke-width="1" stroke-dasharray="2.5 2.5"/><path d="M486.5 338.5V400" fill="none" stroke="#4646a0" stroke-width="1" stroke-dasharray="2.5 2.5"/><path d="M502.5 314V338.5" fill="none" stroke="#4646a0" stroke-width="1" stroke-dasharray="2.5 2.5"/><path d="M386 397.5H506" fill="none" stroke="#4646a0" stroke-width="1" stroke-dasharray="2.5 2.5"/><path d="M409.5 298.5V314" fill="none" stroke="#4646a0" stroke-width="1" stroke-dasharray="2.5 2.5"/><path d="M316.5 313.5H520" fill="none" stroke="#c8c8d4" stroke-width="1" stroke-dasharray="2.5 2.5"/><path d="M316.5 313V469" fill="none" stroke="#c8c8d4" stroke-width="1" stroke-dasharray="2.5 2.5"/><path d="M520.5 313V338" fill="none" stroke="#c8c8d4" stroke-width="1" stroke-dasharray="2.5 2.5"/><path d="M502 338.5H543" fill="none" stroke="#c8c8d4" stroke-width="1" stroke-dasharray="2.5 2.5"/><path d="M543.5 338.5V417" fill="none" stroke="#c8c8d4" stroke-width="1" stroke-dasharray="2.5 2.5"/><path d="M333 390.5H543" fill="none" stroke="#c8c8d4" stroke-width="1" stroke-dasharray="2.5 2.5"/><path d="M333.5 390.5V469" fill="none" stroke="#4646a0" stroke-width="1" stroke-dasharray="2.5 2.5"/><path d="M469 417.5H543" fill="none" stroke="#4646a0" stroke-width="1" stroke-dasharray="2.5 2.5"/><path d="M537.5 390.5V459" fill="none" stroke="#4646a0" stroke-width="1" stroke-dasharray="2.5 2.5"/><path d="M316.5 458.5H537" fill="none" stroke="#c8c8d4" stroke-width="1" stroke-dasharray="2.5 2.5"/><path d="M521.5 417V469" fill="none" stroke="#c8c8d4" stroke-width="1" stroke-dasharray="2.5 2.5"/><path d="M455 424.5H521" fill="none" stroke="#c8c8d4" stroke-width="1" stroke-dasharray="2.5 2.5"/><path d="M316 469.5H521" fill="none" stroke="#4646a0" stroke-width="1" stroke-dasharray="2.5 2.5"/><path d="M381.5 397V425.5" fill="none" stroke="#4646a0" stroke-width="1" stroke-dasharray="2.5 2.5"/><path d="M295.5 419V514" fill="none" stroke="#4646a0" stroke-width="1" stroke-dasharray="2.5 2.5"/><path d="M295.5 419.5H363" fill="none" stroke="#c8c8d4" stroke-width="1" stroke-dasharray="2.5 2.5"/><path d="M363.5 419V514" fill="none" stroke="#4646a0" stroke-width="1" stroke-dasharray="2.5 2.5"/><path d="M295.5 514.5H363" fill="none" stroke="#c8c8d4" stroke-width="1" stroke-dasharray="2.5 2.5"/><path d="M413.5 416V527" fill="none" stroke="#4646a0" stroke-width="1" stroke-dasharray="2.5 2.5"/><path d="M468.5 416V527" fill="none" stroke="#4646a0" stroke-width="1" stroke-dasharray="2.5 2.5"/><path d="M413 527.5H468" fill="none" stroke="#c8c8d4" stroke-width="1" stroke-dasharray="2.5 2.5"/><path d="M433.0 182.0C435.0 182.2 441.0 182.2 445.0 183.0C449.0 183.8 452.8 184.7 457.0 187.0C461.2 189.3 466.5 192.8 470.0 197.0C473.5 201.2 475.3 207.5 478.0 212.0C480.7 216.5 483.5 220.2 486.0 224.0C488.5 227.8 492.0 231.3 493.0 235.0C494.0 238.7 492.8 242.5 492.0 246.0C491.2 249.5 488.7 254.3 488.0 256.0" fill="none" stroke="#5c5c90" stroke-width="0.6"/><path d="M409.0 186.0C410.5 185.7 415.3 184.2 418.0 184.0C420.7 183.8 422.7 184.3 425.0 185.0C427.3 185.7 430.8 187.5 432.0 188.0" fill="none" stroke="#5c5c90" stroke-width="0.6"/><path d="M396.0 192.0C397.5 192.8 402.3 195.7 405.0 197.0C407.7 198.3 410.8 199.5 412.0 200.0" fill="none" stroke="#5c5c90" stroke-width="0.6"/><path d="M393.0 198.0C394.5 198.8 399.2 202.0 402.0 203.0C404.8 204.0 408.7 203.8 410.0 204.0" fill="none" stroke="#5c5c90" stroke-width="0.6"/><path d="M378.0 218.0C379.3 217.3 383.3 214.8 386.0 214.0C388.7 213.2 392.7 213.2 394.0 213.0" fill="none" stroke="#5c5c90" stroke-width="0.6"/><path d="M381.0 224.0C382.2 223.3 385.7 220.7 388.0 220.0C390.3 219.3 393.8 220.0 395.0 220.0" fill="none" stroke="#5c5c90" stroke-width="0.6"/><path d="M397.0 205.0C395.8 206.7 392.0 210.8 390.0 215.0C388.0 219.2 386.0 225.0 385.0 230.0C384.0 235.0 383.7 240.3 384.0 245.0C384.3 249.7 385.3 254.2 387.0 258.0C388.7 261.8 391.5 265.0 394.0 268.0C396.5 271.0 400.7 274.7 402.0 276.0" fill="none" stroke="#5c5c90" stroke-width="0.6"/><path d="M378.0 243.0C379.0 242.5 382.0 240.3 384.0 240.0C386.0 239.7 389.0 240.8 390.0 241.0" fill="none" stroke="#5c5c90" stroke-width="0.6"/><path d="M376.0 250.0 L383.0 247.0" fill="none" stroke="#5c5c90" stroke-width="0.6"/><path d="M392.0 230.0C392.3 232.5 393.0 240.3 394.0 245.0C395.0 249.7 396.3 254.2 398.0 258.0C399.7 261.8 403.0 266.3 404.0 268.0" fill="none" stroke="#5c5c90" stroke-width="0.6"/><path d="M397.0 250.0C397.5 252.0 398.7 258.3 400.0 262.0C401.3 265.7 404.2 270.3 405.0 272.0" fill="none" stroke="#5c5c90" stroke-width="0.6"/><path d="M384.0 200.0C385.7 199.3 390.7 196.5 394.0 196.0C397.3 195.5 402.3 196.8 404.0 197.0" fill="none" stroke="#5c5c90" stroke-width="0.6"/><path d="M380.0 232.0C379.3 233.3 377.3 237.7 376.0 240.0C374.7 242.3 372.7 245.0 372.0 246.0" fill="none" stroke="#5c5c90" stroke-width="0.6"/><path d="M386.0 236.0C385.0 237.7 381.5 242.7 380.0 246.0C378.5 249.3 377.5 254.3 377.0 256.0" fill="none" stroke="#5c5c90" stroke-width="0.6"/><path d="M382.0 262.0C382.7 263.3 384.5 267.7 386.0 270.0C387.5 272.3 390.2 275.0 391.0 276.0" fill="none" stroke="#5c5c90" stroke-width="0.6"/><path d="M388.0 258.0C388.7 259.7 390.3 265.0 392.0 268.0C393.7 271.0 397.0 274.7 398.0 276.0" fill="none" stroke="#5c5c90" stroke-width="0.6"/><path d="M391.0 252.0C391.8 253.7 394.3 259.0 396.0 262.0C397.7 265.0 400.2 268.7 401.0 270.0" fill="none" stroke="#5c5c90" stroke-width="0.6"/><path d="M478.0 238.0C479.0 240.0 482.7 246.0 484.0 250.0C485.3 254.0 485.7 260.0 486.0 262.0" fill="none" stroke="#5c5c90" stroke-width="0.6"/><path d="M470.0 246.0C471.0 248.0 474.7 254.0 476.0 258.0C477.3 262.0 477.7 268.0 478.0 270.0" fill="none" stroke="#5c5c90" stroke-width="0.6"/><path d="M490.0 240.0C490.7 242.0 494.0 247.3 494.0 252.0C494.0 256.7 490.7 265.3 490.0 268.0" fill="none" stroke="#5c5c90" stroke-width="0.6"/><path d="M401.0 264.0C401.5 265.3 403.2 269.3 404.0 272.0C404.8 274.7 405.7 278.7 406.0 280.0" fill="none" stroke="#5c5c90" stroke-width="0.6"/><path d="M396.0 258.0C396.7 259.3 398.8 263.7 400.0 266.0C401.2 268.3 402.5 271.0 403.0 272.0" fill="none" stroke="#5c5c90" stroke-width="0.6"/><path d="M446.0 183.0C448.0 183.2 454.0 182.8 458.0 184.0C462.0 185.2 468.0 189.0 470.0 190.0" fill="none" stroke="#5c5c90" stroke-width="0.6"/><path d="M420.0 205.0C422.0 204.3 427.7 201.5 432.0 201.0C436.3 200.5 441.7 201.2 446.0 202.0C450.3 202.8 456.0 205.3 458.0 206.0" fill="none" stroke="#5c5c90" stroke-width="0.6"/><path d="M415.0 210.0C414.3 212.0 411.8 217.7 411.0 222.0C410.2 226.3 409.5 231.7 410.0 236.0C410.5 240.3 413.3 246.0 414.0 248.0" fill="none" stroke="#5c5c90" stroke-width="0.6"/><path d="M423.0 213.0C422.3 215.0 419.7 220.8 419.0 225.0C418.3 229.2 418.2 234.5 419.0 238.0C419.8 241.5 423.2 244.7 424.0 246.0" fill="none" stroke="#5c5c90" stroke-width="0.6"/><path d="M432.0 214.0C431.7 216.0 429.8 222.0 430.0 226.0C430.2 230.0 431.7 235.0 433.0 238.0C434.3 241.0 437.2 243.0 438.0 244.0" fill="none" stroke="#5c5c90" stroke-width="0.6"/><path d="M442.0 214.0C442.3 216.0 442.7 222.3 444.0 226.0C445.3 229.7 449.0 234.3 450.0 236.0" fill="none" stroke="#5c5c90" stroke-width="0.6"/><path d="M452.0 212.0C453.0 213.7 455.7 218.7 458.0 222.0C460.3 225.3 464.7 230.3 466.0 232.0" fill="none" stroke="#5c5c90" stroke-width="0.6"/><path d="M460.0 205.0C461.3 206.5 465.7 210.2 468.0 214.0C470.3 217.8 472.7 223.0 474.0 228.0C475.3 233.0 475.7 241.3 476.0 244.0" fill="none" stroke="#5c5c90" stroke-width="0.6"/><path d="M405.0 222.0C404.7 224.3 403.0 231.3 403.0 236.0C403.0 240.7 404.7 247.7 405.0 250.0" fill="none" stroke="#5c5c90" stroke-width="0.6"/><path d="M413.0 250.0C414.2 251.7 417.2 257.3 420.0 260.0C422.8 262.7 426.7 264.7 430.0 266.0C433.3 267.3 436.3 268.5 440.0 268.0C443.7 267.5 448.3 265.7 452.0 263.0C455.7 260.3 460.3 253.8 462.0 252.0" fill="none" stroke="#5c5c90" stroke-width="0.6"/><path d="M432.0 258.0C432.7 257.7 434.7 256.0 436.0 256.0C437.3 256.0 439.3 257.7 440.0 258.0" fill="none" stroke="#5c5c90" stroke-width="0.6"/><path d="M434.0 261.0 L438.0 263.0" fill="none" stroke="#5c5c90" stroke-width="0.6"/><path d="M475.0 245.0C475.8 246.7 478.7 251.2 480.0 255.0C481.3 258.8 483.3 263.8 483.0 268.0C482.7 272.2 478.8 278.0 478.0 280.0" fill="none" stroke="#5c5c90" stroke-width="0.6"/><path d="M486.0 250.0C486.7 252.0 490.0 257.7 490.0 262.0C490.0 266.3 486.7 273.7 486.0 276.0" fill="none" stroke="#5c5c90" stroke-width="0.6"/><path d="M425.0 268.0C425.5 270.0 427.0 276.0 428.0 280.0C429.0 284.0 430.5 290.0 431.0 292.0" fill="none" stroke="#5c5c90" stroke-width="0.6"/><path d="M441.0 268.0C440.8 270.2 440.5 277.0 440.0 281.0C439.5 285.0 438.3 290.2 438.0 292.0" fill="none" stroke="#5c5c90" stroke-width="0.6"/><path d="M462.0 268.0C463.7 269.3 468.3 273.3 472.0 276.0C475.7 278.7 480.0 281.3 484.0 284.0C488.0 286.7 494.0 290.7 496.0 292.0" fill="none" stroke="#5c5c90" stroke-width="0.6"/><path d="M408.0 297.0C406.6 299.8 402.5 309.3 399.7 313.8C396.9 318.3 393.1 321.3 391.0 324.0C388.9 326.7 387.7 329.0 387.0 330.0" fill="none" stroke="#5c5c90" stroke-width="0.6"/><path d="M386.0 316.0C386.8 317.3 388.0 321.4 391.0 324.0C394.0 326.6 401.7 326.4 404.0 331.7C406.3 337.0 404.8 351.9 405.0 356.0" fill="none" stroke="#5c5c90" stroke-width="0.6"/><path d="M387.0 311.6C389.1 314.4 396.2 324.8 399.7 328.5C403.2 332.2 406.6 332.9 408.0 333.8" fill="none" stroke="#5c5c90" stroke-width="0.6"/><path d="M420.8 320.0C421.8 322.5 424.9 330.4 427.0 335.0C429.1 339.6 432.4 345.4 433.5 347.5" fill="none" stroke="#5c5c90" stroke-width="0.6"/><path d="M458.8 290.5C459.0 293.8 459.6 302.6 460.0 310.0C460.4 317.4 460.8 330.8 461.0 334.9" fill="none" stroke="#5c5c90" stroke-width="0.6"/><path d="M467.0 318.0 L473.5 337.0" fill="none" stroke="#5c5c90" stroke-width="0.6"/><path d="M409.0 349.6C412.0 349.4 420.8 348.4 427.0 348.6C433.2 348.8 439.7 350.5 446.0 350.7C452.3 350.9 461.8 349.8 465.0 349.6" fill="none" stroke="#5c5c90" stroke-width="0.6"/><path d="M475.6 292.7C478.4 294.1 487.8 297.7 492.5 301.0C497.2 304.3 502.9 308.1 504.0 312.7C505.1 317.3 500.9 324.3 499.0 328.5C497.1 332.7 493.6 336.4 492.5 338.0" fill="none" stroke="#5c5c90" stroke-width="0.6"/><path d="M319.5 372.8C323.7 372.3 337.9 372.7 344.9 369.7C351.9 366.7 356.1 356.8 361.7 354.9C367.3 352.9 371.2 357.3 378.6 358.0C386.0 358.7 396.9 357.9 406.0 359.0C415.1 360.1 425.4 363.8 433.5 364.4C441.6 364.9 451.1 362.6 454.6 362.3" fill="none" stroke="#5c5c90" stroke-width="0.6"/><path d="M319.5 372.8C319.1 376.3 317.0 387.8 317.4 394.0C317.8 400.2 319.4 406.4 322.0 410.0C324.6 413.6 328.9 412.7 333.0 415.5C337.1 418.3 342.9 425.6 346.7 426.7C350.4 427.8 351.8 421.3 355.5 422.0C359.2 422.7 364.2 429.2 369.0 431.0C373.8 432.8 380.0 436.0 384.4 433.0C388.8 430.0 391.8 415.9 395.5 413.0C399.2 410.1 403.8 413.6 406.7 415.5C409.6 417.4 409.7 424.4 413.0 424.4C416.3 424.4 422.2 418.1 426.7 415.5C431.2 412.9 436.7 408.2 440.0 409.0C443.3 409.8 443.7 418.2 446.7 420.0C449.7 421.8 454.5 421.2 457.8 420.0C461.1 418.8 465.2 414.2 466.7 413.0" fill="none" stroke="#5c5c90" stroke-width="0.6"/><path d="M347.0 377.0C345.8 380.0 342.5 389.4 340.0 395.0C337.5 400.6 333.3 408.2 332.0 410.8" fill="none" stroke="#5c5c90" stroke-width="0.6"/><path d="M359.6 387.6C359.0 389.7 357.1 395.4 356.0 400.0C354.9 404.6 353.5 412.5 353.0 415.0" fill="none" stroke="#5c5c90" stroke-width="0.6"/><path d="M370.0 389.7C369.8 392.2 369.3 400.1 369.0 405.0C368.7 409.9 368.2 416.7 368.0 419.0" fill="none" stroke="#5c5c90" stroke-width="0.6"/><path d="M385.0 370.0C385.8 373.3 388.7 383.3 390.0 390.0C391.3 396.7 392.5 406.7 393.0 410.0" fill="none" stroke="#5c5c90" stroke-width="0.6"/><path d="M420.0 368.0C421.3 371.7 425.3 383.8 428.0 390.0C430.7 396.2 434.7 402.5 436.0 405.0" fill="none" stroke="#5c5c90" stroke-width="0.6"/><path d="M440.0 366.0C442.0 370.0 448.7 382.3 452.0 390.0C455.3 397.7 458.7 408.3 460.0 412.0" fill="none" stroke="#5c5c90" stroke-width="0.6"/><path d="M454.6 351.7C457.0 355.6 463.8 367.9 469.0 375.0C474.2 382.1 478.9 389.8 486.0 394.0C493.1 398.2 502.3 397.2 511.5 400.0C520.7 402.8 536.1 409.0 541.0 410.8" fill="none" stroke="#5c5c90" stroke-width="0.6"/><path d="M456.7 358.0C459.5 362.6 468.9 378.2 473.5 385.5C478.1 392.8 482.2 399.2 484.0 402.0" fill="none" stroke="#5c5c90" stroke-width="0.6"/><path d="M484.0 339.0C486.5 343.9 495.2 360.9 499.0 368.6C502.8 376.4 505.7 382.7 507.0 385.5" fill="none" stroke="#5c5c90" stroke-width="0.6"/><path d="M511.5 405.5C513.8 406.2 520.1 408.8 525.0 410.0C529.9 411.2 538.3 412.5 541.0 413.0" fill="none" stroke="#5c5c90" stroke-width="0.6"/><path d="M513.0 389.0C515.5 390.5 523.2 394.3 528.0 398.0C532.8 401.7 539.7 408.8 542.0 411.0" fill="none" stroke="#5c5c90" stroke-width="0.6"/><path d="M469.0 433.0C470.8 436.3 476.0 450.7 480.0 453.0C484.0 455.3 488.2 449.2 493.0 446.7C497.8 444.2 504.2 442.2 509.0 437.8C513.8 433.4 519.8 423.0 522.0 420.0" fill="none" stroke="#5c5c90" stroke-width="0.6"/><path d="M490.0 420.0C491.0 421.7 493.8 427.3 496.0 430.0C498.2 432.7 501.8 435.0 503.0 436.0" fill="none" stroke="#5c5c90" stroke-width="0.6"/><path d="M466.0 440.0C466.7 442.5 468.0 451.3 470.0 455.0C472.0 458.7 476.7 460.8 478.0 462.0" fill="none" stroke="#5c5c90" stroke-width="0.6"/><path d="M340.0 420.0C338.5 425.5 333.6 444.2 331.0 453.0C328.4 461.8 328.4 465.9 324.4 473.0C320.3 480.1 311.3 489.5 306.7 495.5C302.1 501.5 296.3 506.1 296.7 509.0C297.1 511.9 302.9 515.7 309.0 513.0C315.1 510.3 328.2 500.0 333.0 493.0C337.8 486.0 335.9 476.9 337.8 471.0C339.7 465.1 340.2 465.6 344.4 457.8C348.6 450.0 359.9 430.0 363.0 424.4" fill="none" stroke="#5c5c90" stroke-width="0.6"/><path d="M413.0 424.0C416.0 427.8 425.8 439.2 431.0 446.7C436.2 454.2 441.4 462.7 444.4 469.0C447.4 475.3 449.4 477.1 449.0 484.4C448.6 491.7 443.5 506.7 442.0 513.0C440.5 519.3 438.2 519.9 440.0 522.0C441.8 524.1 448.9 527.0 453.0 525.5C457.1 524.0 462.1 518.8 464.4 513.0C466.7 507.2 466.7 497.7 466.7 491.0C466.7 484.3 466.7 478.2 464.4 473.0C462.1 467.8 457.1 466.2 453.0 460.0C448.9 453.8 442.2 439.6 440.0 435.5" fill="none" stroke="#5c5c90" stroke-width="0.6"/><g transform="translate(290.5 175.5) rotate(45)"><path d="M-6 0L-2.5 -3.5V-1.3H2.5V-3.5L6 0L2.5 3.5V1.3H-2.5V3.5Z" fill="#000"/></g><g transform="translate(548.5 175.5) rotate(-45)"><path d="M-6 0L-2.5 -3.5V-1.3H2.5V-3.5L6 0L2.5 3.5V1.3H-2.5V3.5Z" fill="#000"/></g><g transform="translate(290.5 532) rotate(-45)"><path d="M-6 0L-2.5 -3.5V-1.3H2.5V-3.5L6 0L2.5 3.5V1.3H-2.5V3.5Z" fill="#000"/></g><g transform="translate(548.5 532) rotate(45)"><path d="M-6 0L-2.5 -3.5V-1.3H2.5V-3.5L6 0L2.5 3.5V1.3H-2.5V3.5Z" fill="#000"/></g><g transform="translate(419 173) rotate(90)"><path d="M-6 0L-2.5 -3.5V-1.3H2.5V-3.5L6 0L2.5 3.5V1.3H-2.5V3.5Z" fill="#000"/></g><g transform="translate(419 534) rotate(90)"><path d="M-6 0L-2.5 -3.5V-1.3H2.5V-3.5L6 0L2.5 3.5V1.3H-2.5V3.5Z" fill="#000"/></g><g transform="translate(288 353) rotate(0)"><path d="M-6 0L-2.5 -3.5V-1.3H2.5V-3.5L6 0L2.5 3.5V1.3H-2.5V3.5Z" fill="#000"/></g><g transform="translate(550 353) rotate(0)"><path d="M-6 0L-2.5 -3.5V-1.3H2.5V-3.5L6 0L2.5 3.5V1.3H-2.5V3.5Z" fill="#000"/></g><path d="M692 217V229L695 226L697.5 231L699 230.3L696.7 225.5H700.5Z" fill="#fff" stroke="#333" stroke-width="0.8"/></svg>
<svg style="left:810px;top:342px" width="4" height="11"><circle cx="2" cy="1.5" r="1" fill="#ddd"/><circle cx="2" cy="5" r="1" fill="#ddd"/><circle cx="2" cy="8.5" r="1" fill="#ddd"/></svg>
<svg style="left:795px;top:69px" width="12" height="11"><rect x="0.5" y="0.5" width="10" height="7" fill="none" stroke="#ddd"/><path d="M3 10H8M5.5 8V10" stroke="#ddd"/></svg>
<svg style="left:830px;top:77px" width="13" height="13"><path d="M1 2H9M1 5H11M1 8H8M1 11H9" stroke="#eee" stroke-width="1.8"/></svg>
<svg style="left:871px;top:77px" width="13" height="13"><path d="M1.5 1.5H6L9 4.5V11.5H1.5Z" fill="none" stroke="#eee" stroke-width="1.4"/><path d="M6 8L11 8M9 6L11 8L9 10" stroke="#3a3" stroke-width="1.4" fill="none"/></svg>
<svg style="left:914px;top:77px" width="13" height="13"><rect x="1" y="6" width="5" height="5" fill="#eee"/><path d="M3 1L11 9M11 1L3 9" stroke="#2a9a2a" stroke-width="1.6"/></svg>
<svg style="left:957px;top:77px" width="13" height="13"><path d="M1.5 1.5H10.5V11.5H1.5Z" fill="none" stroke="#ddd" stroke-width="1"/><path d="M3 10L10 2" stroke="#eee" stroke-width="1.6"/></svg>
<svg style="left:999px;top:77px" width="13" height="13"><path d="M1 2.5H11M1 6H11M1 9.5H11" stroke="#8ab8f0" stroke-width="2"/><path d="M3 4L9 4M3 8H9" stroke="#eee" stroke-width="1"/></svg>
<svg style="left:1046px;top:77px" width="13" height="13"><rect x="0.5" y="0.5" width="5" height="5" fill="#2a9a4a"/><rect x="6.5" y="0.5" width="5" height="5" fill="#e0206a"/><rect x="0.5" y="6.5" width="5" height="5" fill="none" stroke="#eee"/><rect x="6.5" y="6.5" width="5" height="5" fill="none" stroke="#eee"/></svg>
<svg style="left:1089px;top:77px" width="13" height="13"><path d="M2 3L8 1V11L2 12Z" fill="#eee"/><path d="M9 2L11 3V10L9 11" stroke="#ccc" fill="none"/><path d="M3 5H7M3 8H7" stroke="#555"/></svg>
<svg style="left:1132px;top:77px" width="13" height="13"><path d="M1 11L5 7M4 8C5 4 8 3 11 2" stroke="#eee" stroke-width="1.4" fill="none"/><circle cx="9" cy="3" r="1.4" fill="#eee"/><circle cx="3" cy="9" r="1.4" fill="#eee"/></svg>
<svg style="left:1174px;top:77px" width="13" height="13"><circle cx="5" cy="5" r="3.8" fill="none" stroke="#eee" stroke-width="1.8"/><path d="M8 8L11 11" stroke="#eee" stroke-width="2"/></svg>
<div class="a" style="left:993px;top:93px;width:34px;height:2px;background:#3a6fc0"></div>
<svg style="left:1015px;top:79px" width="9" height="9"><path d="M1 1L8 8M8 1L1 8" stroke="#aaa" stroke-width="1.1"/></svg>
<div class="a" style="left:1224px;top:72px;width:20px;height:22px;background:#262626"></div>
<svg style="left:1229px;top:79px" width="11" height="8"><path d="M1 1.5L5.5 6L10 1.5" fill="none" stroke="#999" stroke-width="1.3"/></svg>
<svg style="left:823px;top:100px" width="13" height="13"><path d="M6.5 1V7M3.5 4H9.5" stroke="#2ab02a" stroke-width="1.8"/><path d="M1 11L3 9H12L10 11Z" fill="#eee"/></svg>
<svg style="left:979px;top:102px" width="12" height="8"><path d="M1 6.5L6 1.5L11 6.5" fill="none" stroke="#eee" stroke-width="1.6"/></svg>
<svg style="left:1003px;top:103px" width="12" height="8"><path d="M1 1.5L6 6.5L11 1.5" fill="none" stroke="#eee" stroke-width="1.6"/></svg>
<svg style="left:1028px;top:101px" width="11" height="12"><path d="M1 2.5H10M4 2V1H7V2" stroke="#ddd" stroke-width="1.2" fill="none"/><path d="M2 4H9L8.5 11H2.5Z" fill="#ddd"/></svg>
<svg style="left:1057px;top:101px" width="12" height="12"><circle cx="6" cy="6" r="3.5" fill="none" stroke="#eee" stroke-width="2.5" stroke-dasharray="1.6 1"/><circle cx="6" cy="6" r="2.5" fill="#eee"/><circle cx="6" cy="6" r="1.2" fill="#2b2b2b"/></svg>
<svg style="left:1081px;top:101px" width="13" height="13"><circle cx="5" cy="5" r="3.8" fill="none" stroke="#eee" stroke-width="1.8"/><path d="M8 8L11 11" stroke="#eee" stroke-width="2"/></svg>
<svg style="left:819px;top:128px" width="7" height="6"><path d="M0 0.5H6.5L3.25 4.5Z" fill="#9cc0f0"/></svg>
<svg style="left:830px;top:124px" width="10" height="13"><path d="M1 1H6L9 4V12H1Z" fill="none" stroke="#6a9ae8" stroke-width="1.2"/></svg>
<svg style="left:828px;top:145px" width="6" height="8"><path d="M0.5 0.5V7L5 3.75Z" fill="#b8d4f8"/></svg>
<svg style="left:838px;top:144px" width="11" height="10"><path d="M0.5 1.5H4L5 2.5H10V9H0.5Z" fill="none" stroke="#7aa4e8" stroke-width="1.1"/></svg>
<svg style="left:837px;top:161px" width="11" height="12"><path d="M2 11V4C2 2 3 1 5 1" fill="none" stroke="#7aa4e8" stroke-width="1" stroke-dasharray="1.5 1"/><path d="M6 1.5H9" stroke="#9ab8e8" stroke-width="1"/></svg>
<svg style="left:837px;top:179px" width="11" height="12"><path d="M2 11V4C2 2 3 1 5 1" fill="none" stroke="#7aa4e8" stroke-width="1" stroke-dasharray="1.5 1"/><path d="M6 1.5H9" stroke="#9ab8e8" stroke-width="1"/></svg>
<svg style="left:837px;top:197px" width="11" height="12"><path d="M2 11V4C2 2 3 1 5 1" fill="none" stroke="#7aa4e8" stroke-width="1" stroke-dasharray="1.5 1"/><path d="M6 1.5H9" stroke="#9ab8e8" stroke-width="1"/></svg>
<svg style="left:837px;top:215px" width="11" height="12"><path d="M2 11V4C2 2 3 1 5 1" fill="none" stroke="#7aa4e8" stroke-width="1" stroke-dasharray="1.5 1"/><path d="M6 1.5H9" stroke="#9ab8e8" stroke-width="1"/></svg>
<svg style="left:837px;top:233px" width="11" height="12"><path d="M2 11V4C2 2 3 1 5 1" fill="none" stroke="#7aa4e8" stroke-width="1" stroke-dasharray="1.5 1"/><path d="M6 1.5H9" stroke="#9ab8e8" stroke-width="1"/></svg>
<svg style="left:837px;top:251px" width="11" height="12"><path d="M2 11V4C2 2 3 1 5 1" fill="none" stroke="#7aa4e8" stroke-width="1" stroke-dasharray="1.5 1"/><path d="M6 1.5H9" stroke="#9ab8e8" stroke-width="1"/></svg>
<svg style="left:837px;top:269px" width="11" height="12"><path d="M2 11V4C2 2 3 1 5 1" fill="none" stroke="#7aa4e8" stroke-width="1" stroke-dasharray="1.5 1"/><path d="M6 1.5H9" stroke="#9ab8e8" stroke-width="1"/></svg>
<svg style="left:828px;top:289px" width="6" height="8"><path d="M0.5 0.5V7L5 3.75Z" fill="#b8d4f8"/></svg>
<svg style="left:838px;top:288px" width="11" height="10"><path d="M0.5 1.5H4L5 2.5H10V9H0.5Z" fill="none" stroke="#7aa4e8" stroke-width="1.1"/></svg>
<svg style="left:837px;top:305px" width="11" height="12"><path d="M2 11V4C2 2 3 1 5 1" fill="none" stroke="#7aa4e8" stroke-width="1" stroke-dasharray="1.5 1"/><path d="M6 1.5H9" stroke="#9ab8e8" stroke-width="1"/></svg>
<svg style="left:828px;top:325px" width="6" height="8"><path d="M0.5 0.5V7L5 3.75Z" fill="#b8d4f8"/></svg>
<svg style="left:838px;top:324px" width="11" height="10"><path d="M0.5 1.5H4L5 2.5H10V9H0.5Z" fill="none" stroke="#7aa4e8" stroke-width="1.1"/></svg>
<svg style="left:837px;top:341px" width="11" height="12"><path d="M2 11V4C2 2 3 1 5 1" fill="none" stroke="#7aa4e8" stroke-width="1" stroke-dasharray="1.5 1"/><path d="M6 1.5H9" stroke="#9ab8e8" stroke-width="1"/></svg>
<svg style="left:828px;top:361px" width="6" height="8"><path d="M0.5 0.5V7L5 3.75Z" fill="#b8d4f8"/></svg>
<svg style="left:838px;top:360px" width="11" height="10"><path d="M0.5 1.5H4L5 2.5H10V9H0.5Z" fill="none" stroke="#7aa4e8" stroke-width="1.1"/></svg>
<svg style="left:837px;top:377px" width="11" height="12"><path d="M2 11V4C2 2 3 1 5 1" fill="none" stroke="#7aa4e8" stroke-width="1" stroke-dasharray="1.5 1"/><path d="M6 1.5H9" stroke="#9ab8e8" stroke-width="1"/></svg>
<svg style="left:828px;top:397px" width="6" height="8"><path d="M0.5 0.5V7L5 3.75Z" fill="#b8d4f8"/></svg>
<svg style="left:838px;top:396px" width="11" height="10"><path d="M0.5 1.5H4L5 2.5H10V9H0.5Z" fill="none" stroke="#7aa4e8" stroke-width="1.1"/></svg>
<svg style="left:837px;top:413px" width="11" height="12"><path d="M2 11V4C2 2 3 1 5 1" fill="none" stroke="#7aa4e8" stroke-width="1" stroke-dasharray="1.5 1"/><path d="M6 1.5H9" stroke="#9ab8e8" stroke-width="1"/></svg>
<svg style="left:828px;top:433px" width="6" height="8"><path d="M0.5 0.5V7L5 3.75Z" fill="#b8d4f8"/></svg>
<svg style="left:838px;top:432px" width="11" height="10"><path d="M0.5 1.5H4L5 2.5H10V9H0.5Z" fill="none" stroke="#7aa4e8" stroke-width="1.1"/></svg>
<svg style="left:837px;top:449px" width="11" height="12"><path d="M2 11V4C2 2 3 1 5 1" fill="none" stroke="#7aa4e8" stroke-width="1" stroke-dasharray="1.5 1"/><path d="M6 1.5H9" stroke="#9ab8e8" stroke-width="1"/></svg>
<svg style="left:837px;top:467px" width="11" height="12"><path d="M2 11V4C2 2 3 1 5 1" fill="none" stroke="#7aa4e8" stroke-width="1" stroke-dasharray="1.5 1"/><path d="M6 1.5H9" stroke="#9ab8e8" stroke-width="1"/></svg>
<div class="a" style="left:1240px;top:139px;width:4px;height:1px;background:#0e1e5a"></div>
<div class="a" style="left:1240px;top:157px;width:4px;height:1px;background:#0e1e5a"></div>
<div class="a" style="left:1240px;top:175px;width:4px;height:1px;background:#0e1e5a"></div>
<div class="a" style="left:1240px;top:193px;width:4px;height:1px;background:#0e1e5a"></div>
<div class="a" style="left:1240px;top:211px;width:4px;height:1px;background:#0e1e5a"></div>
<div class="a" style="left:1240px;top:229px;width:4px;height:1px;background:#0e1e5a"></div>
<div class="a" style="left:1240px;top:247px;width:4px;height:1px;background:#0e1e5a"></div>
<div class="a" style="left:1240px;top:265px;width:4px;height:1px;background:#0e1e5a"></div>
<div class="a" style="left:1240px;top:283px;width:4px;height:1px;background:#0e1e5a"></div>
<div class="a" style="left:1240px;top:301px;width:4px;height:1px;background:#0e1e5a"></div>
<div class="a" style="left:1240px;top:319px;width:4px;height:1px;background:#0e1e5a"></div>
<div class="a" style="left:1240px;top:337px;width:4px;height:1px;background:#0e1e5a"></div>
<div class="a" style="left:1240px;top:355px;width:4px;height:1px;background:#0e1e5a"></div>
<div class="a" style="left:1240px;top:373px;width:4px;height:1px;background:#0e1e5a"></div>
<div class="a" style="left:1240px;top:391px;width:4px;height:1px;background:#0e1e5a"></div>
<div class="a" style="left:1240px;top:409px;width:4px;height:1px;background:#0e1e5a"></div>
<div class="a" style="left:1240px;top:427px;width:4px;height:1px;background:#0e1e5a"></div>
<div class="a" style="left:1240px;top:445px;width:4px;height:1px;background:#0e1e5a"></div>
<div class="a" style="left:1240px;top:463px;width:4px;height:1px;background:#0e1e5a"></div>
<div class="a" style="left:1240px;top:481px;width:4px;height:1px;background:#0e1e5a"></div>
<div class="t" style="left:1004px;top:490px;font-size:15px;color:#8e8e8e;transform:rotate(-11deg);transform-origin:left center;letter-spacing:4px">初期費用</div>
<svg style="left:0;top:0" width="1280" height="720"><path d="M1001.7 508.4C1008 512 1013 514 1020 512C1028 509 1033 503 1040 502C1050 501 1058 501 1068 499C1080 497 1088 490 1092.6 476.8" fill="none" stroke="#8a8a8a" stroke-width="1"/><circle cx="1043" cy="505" r="1.8" fill="none" stroke="#888" stroke-width="0.9"/></svg>
<svg style="left:1237px;top:636px" width="40" height="10"><path d="M1 6L5 2L9 6M15 2L19 6L23 2" fill="none" stroke="#888" stroke-width="1.1"/><path d="M28 2H37M28 5H37M28 8H37" stroke="#eee" stroke-width="1.3"/></svg>
<svg style="left:1257px;top:76px" width="13" height="13"><path d="M2 1.5H7L10 4.5V11.5H2Z" fill="none" stroke="#eee" stroke-width="1.5"/><circle cx="10" cy="2" r="1.5" fill="#3a3"/></svg>
<svg style="left:1257px;top:100px" width="13" height="13"><path d="M1 3H5L6 4.5H11V11H1Z" fill="none" stroke="#eee" stroke-width="1.5"/><rect x="3" y="6" width="7" height="4" fill="#eee"/></svg>
<svg style="left:1257px;top:124px" width="13" height="13"><path d="M6 1V6M3.5 4L6 6.5L8.5 4" stroke="#2ab02a" stroke-width="1.8" fill="none"/><path d="M1 8H11V11H1Z" fill="#eee"/></svg>
<svg style="left:1257px;top:149px" width="13" height="13"><rect x="3" y="1" width="6" height="3" fill="#eee"/><rect x="1" y="4" width="10" height="5" fill="#eee"/><rect x="3" y="8" width="6" height="3" fill="#ccc"/></svg>
<svg style="left:1257px;top:177px" width="13" height="13"><path d="M2 1.5H7L10 4.5V11.5H2Z" fill="none" stroke="#eee" stroke-width="1.5"/><path d="M4 7H8M6.5 5L8.5 7L6.5 9" stroke="#3a3" stroke-width="1.4" fill="none"/></svg>
<svg style="left:1257px;top:201px" width="13" height="13"><path d="M1.5 1.5H6.5L9 4V11.5H1.5Z" fill="none" stroke="#eee" stroke-width="1.5"/><path d="M6 7H11M9 5L11 7L9 9" stroke="#3a3" stroke-width="1.4" fill="none"/></svg>
<svg style="left:1257px;top:228px" width="13" height="13"><path d="M4 2L1 5L4 8" fill="none" stroke="#eee" stroke-width="1.4"/><path d="M1.5 5H7A3 3 0 0 1 7 11H5" fill="none" stroke="#eee" stroke-width="1.4"/></svg>
<svg style="left:1257px;top:254px" width="13" height="13"><path d="M8 2L11 5L8 8" fill="none" stroke="#777" stroke-width="1.4"/><path d="M10.5 5H5A3 3 0 0 0 5 11H7" fill="none" stroke="#777" stroke-width="1.4"/></svg>
<svg style="left:1257px;top:281px" width="13" height="13"><rect x="1" y="1" width="6" height="6" fill="#eee"/><rect x="5" y="5" width="6" height="6" fill="#eee" stroke="#2f2f2f"/></svg>
<svg style="left:1257px;top:305px" width="13" height="13"><circle cx="3" cy="9" r="2" fill="none" stroke="#eee" stroke-width="1.4"/><circle cx="9" cy="9" r="2" fill="none" stroke="#eee" stroke-width="1.4"/><path d="M2 1L8 8M10 1L4 8" stroke="#eee" stroke-width="1.3"/></svg>
<svg style="left:1257px;top:330px" width="13" height="13"><rect x="2" y="2" width="8" height="10" fill="#eee"/><rect x="4" y="1" width="4" height="2" fill="#aaa"/><path d="M3 5H9" stroke="#888"/></svg>
<div class="a" style="left:1252px;top:350px;width:24px;height:26px;background:#262626;border:1px solid #1c1c1c;border-radius:3px"></div>
<svg style="left:1259px;top:360px" width="10" height="6"><path d="M0 0H9L4.5 5Z" fill="#f0f0f0"/></svg>
<div class="a" style="left:183px;top:664px;width:2px;height:13px;background:#4a7ad0"></div>
<div class="inp" style="left:1129px;top:652px;width:61px;height:28px"></div>
<div class="inp" style="left:1207px;top:652px;width:66px;height:28px"></div>
<svg style="left:1168px;top:662px" width="22" height="11"><path d="M0.5 5.5H8.5M11.5 5.5H20.5M16 1V10" stroke="#e8e8e8" stroke-width="1.8"/></svg>
<svg style="left:1252px;top:662px" width="22" height="11"><path d="M0.5 5.5H8.5M11.5 5.5H20.5M16 1V10" stroke="#e8e8e8" stroke-width="1.8"/></svg>
<div class="t" id="t0" style="left:20px;top:3.5px;font-size:11px;color:#eef0f2;font-weight:normal;transform:scaleX(0.805);transform-origin:left center;">*新規ドキュメント 1 - Inkscape</div>
<div class="t" id="t1" style="left:5.6px;top:24.2px;font-size:10.5px;color:#e2e2e2;font-weight:normal;transform:scaleX(0.681);transform-origin:left center;">ファイル(F)</div>
<div class="t" id="t2" style="left:55.6px;top:24.2px;font-size:10.5px;color:#e2e2e2;font-weight:normal;transform:scaleX(0.872);transform-origin:left center;">編集(E)</div>
<div class="t" id="t3" style="left:97.8px;top:24.2px;font-size:10.5px;color:#e2e2e2;font-weight:normal;transform:scaleX(0.911);transform-origin:left center;">表示(V)</div>
<div class="t" id="t4" style="left:141px;top:24.2px;font-size:10.5px;color:#e2e2e2;font-weight:normal;transform:scaleX(0.704);transform-origin:left center;">レイヤー(L)</div>
<div class="t" id="t5" style="left:192px;top:24.2px;font-size:10.5px;color:#e2e2e2;font-weight:normal;transform:scaleX(0.690);transform-origin:left center;">オブジェクト(O)</div>
<div class="t" id="t6" style="left:259px;top:24.2px;font-size:10.5px;color:#e2e2e2;font-weight:normal;transform:scaleX(0.778);transform-origin:left center;">パス(P)</div>
<div class="t" id="t7" style="left:297px;top:24.2px;font-size:10.5px;color:#e2e2e2;font-weight:normal;transform:scaleX(0.705);transform-origin:left center;">テキスト(T)</div>
<div class="t" id="t8" style="left:348px;top:24.2px;font-size:10.5px;color:#e2e2e2;font-weight:normal;transform:scaleX(0.677);transform-origin:left center;">フィルター(S)</div>
<div class="t" id="t9" style="left:406px;top:24.2px;font-size:10.5px;color:#e2e2e2;font-weight:normal;transform:scaleX(0.702);transform-origin:left center;">エクステンション(N)</div>
<div class="t" id="t10" style="left:488.7px;top:24.2px;font-size:10.5px;color:#e2e2e2;font-weight:normal;transform:scaleX(0.784);transform-origin:left center;">ヘルプ(H)</div>
<div class="t" id="t11" style="left:342.5px;top:47.8px;font-size:10.5px;color:#d8d8d8;font-weight:normal;transform:scaleX(0.756);transform-origin:left center;">X:</div>
<div class="t" id="t12" style="left:357.5px;top:47.8px;font-size:10.5px;color:#e8e8e8;font-weight:normal;transform:scaleX(0.887);transform-origin:left center;">34.927</div>
<div class="t" id="t13" style="left:440px;top:47.8px;font-size:10.5px;color:#d8d8d8;font-weight:normal;transform:scaleX(0.749);transform-origin:left center;">Y:</div>
<div class="t" id="t14" style="left:451px;top:47.8px;font-size:10.5px;color:#e8e8e8;font-weight:normal;transform:scaleX(0.887);transform-origin:left center;">51.698</div>
<div class="t" id="t15" style="left:550px;top:47.8px;font-size:10.5px;color:#e8e8e8;font-weight:normal;transform:scaleX(0.895);transform-origin:left center;">142.540</div>
<div class="t" id="t16" style="left:656.4px;top:47.8px;font-size:10.5px;color:#d8d8d8;font-weight:normal;transform:scaleX(0.914);transform-origin:left center;">H:</div>
<div class="t" id="t17" style="left:672.8px;top:47.8px;font-size:10.5px;color:#e8e8e8;font-weight:normal;transform:scaleX(0.895);transform-origin:left center;">199.596</div>
<div class="t" id="t18" style="left:760px;top:48.8px;font-size:10.5px;color:#d8d8d8;font-weight:normal;transform:scaleX(1.029);transform-origin:left center;">mm</div>
<div class="t" id="t19" style="left:62.0px;top:71.0px;font-size:9px;color:#e0e0e0;font-weight:normal;transform:scaleX(1.000);transform-origin:left center;">-100</div>
<div class="t" id="t20" style="left:105.75px;top:71.0px;font-size:9px;color:#e0e0e0;font-weight:normal;transform:scaleX(1.000);transform-origin:left center;">-75</div>
<div class="t" id="t21" style="left:149.5px;top:71.0px;font-size:9px;color:#e0e0e0;font-weight:normal;transform:scaleX(1.000);transform-origin:left center;">-50</div>
<div class="t" id="t22" style="left:193.25px;top:71.0px;font-size:9px;color:#e0e0e0;font-weight:normal;transform:scaleX(1.000);transform-origin:left center;">-25</div>
<div class="t" id="t23" style="left:237.0px;top:71.0px;font-size:9px;color:#e0e0e0;font-weight:normal;transform:scaleX(1.000);transform-origin:left center;">0</div>
<div class="t" id="t24" style="left:280.75px;top:71.0px;font-size:9px;color:#e0e0e0;font-weight:normal;transform:scaleX(1.000);transform-origin:left center;">25</div>
<div class="t" id="t25" style="left:324.5px;top:71.0px;font-size:9px;color:#e0e0e0;font-weight:normal;transform:scaleX(1.000);transform-origin:left center;">50</div>
<div class="t" id="t26" style="left:368.25px;top:71.0px;font-size:9px;color:#e0e0e0;font-weight:normal;transform:scaleX(1.000);transform-origin:left center;">75</div>
<div class="t" id="t27" style="left:412.0px;top:71.0px;font-size:9px;color:#e0e0e0;font-weight:normal;transform:scaleX(1.000);transform-origin:left center;">100</div>
<div class="t" id="t28" style="left:455.75px;top:71.0px;font-size:9px;color:#e0e0e0;font-weight:normal;transform:scaleX(1.000);transform-origin:left center;">125</div>
<div class="t" id="t29" style="left:499.5px;top:71.0px;font-size:9px;color:#e0e0e0;font-weight:normal;transform:scaleX(1.000);transform-origin:left center;">150</div>
<div class="t" id="t30" style="left:543.25px;top:71.0px;font-size:9px;color:#e0e0e0;font-weight:normal;transform:scaleX(1.000);transform-origin:left center;">175</div>
<div class="t" id="t31" style="left:587.0px;top:71.0px;font-size:9px;color:#e0e0e0;font-weight:normal;transform:scaleX(1.000);transform-origin:left center;">200</div>
<div class="t" id="t32" style="left:630.75px;top:71.0px;font-size:9px;color:#e0e0e0;font-weight:normal;transform:scaleX(1.000);transform-origin:left center;">225</div>
<div class="t" id="t33" style="left:674.5px;top:71.0px;font-size:9px;color:#e0e0e0;font-weight:normal;transform:scaleX(1.000);transform-origin:left center;">250</div>
<div class="t" id="t34" style="left:718.25px;top:71.0px;font-size:9px;color:#e0e0e0;font-weight:normal;transform:scaleX(1.000);transform-origin:left center;">275</div>
<div class="t" id="t35" style="left:762.0px;top:71.0px;font-size:9px;color:#e0e0e0;font-weight:normal;transform:scaleX(1.000);transform-origin:left center;">300</div>
<div class="t" id="t36" style="left:844px;top:125.8px;font-size:10.5px;color:#eef2f8;font-weight:normal;transform:scaleX(0.856);transform-origin:left center;">Layer 1</div>
<div class="t" id="t37" style="left:853px;top:143.8px;font-size:10.5px;color:#f2f4f8;font-weight:normal;transform:scaleX(0.900);transform-origin:left center;">口線画</div>
<div class="t" id="t38" style="left:853px;top:161.8px;font-size:10.5px;color:#f2f4f8;font-weight:normal;transform:scaleX(0.900);transform-origin:left center;">歯線画</div>
<div class="t" id="t39" style="left:853px;top:179.8px;font-size:10.5px;color:#f2f4f8;font-weight:normal;transform:scaleX(0.900);transform-origin:left center;">口内線画</div>
<div class="t" id="t40" style="left:853px;top:197.8px;font-size:10.5px;color:#f2f4f8;font-weight:normal;transform:scaleX(0.900);transform-origin:left center;">前髪線画</div>
<div class="t" id="t41" style="left:853px;top:215.8px;font-size:10.5px;color:#f2f4f8;font-weight:normal;transform:scaleX(0.795);transform-origin:left center;">おくれ毛線画</div>
<div class="t" id="t42" style="left:853px;top:233.8px;font-size:10.5px;color:#f2f4f8;font-weight:normal;transform:scaleX(0.900);transform-origin:left center;">横髪左線画</div>
<div class="t" id="t43" style="left:853px;top:251.8px;font-size:10.5px;color:#f2f4f8;font-weight:normal;transform:scaleX(0.900);transform-origin:left center;">頭線画</div>
<div class="t" id="t44" style="left:853px;top:269.8px;font-size:10.5px;color:#f2f4f8;font-weight:normal;transform:scaleX(0.900);transform-origin:left center;">服線画</div>
<div class="t" id="t45" style="left:853px;top:287.8px;font-size:10.5px;color:#f2f4f8;font-weight:normal;transform:scaleX(0.900);transform-origin:left center;">肩線画</div>
<div class="t" id="t46" style="left:853px;top:305.8px;font-size:10.5px;color:#f2f4f8;font-weight:normal;transform:scaleX(0.900);transform-origin:left center;">服線画</div>
<div class="t" id="t47" style="left:853px;top:323.8px;font-size:10.5px;color:#f2f4f8;font-weight:normal;transform:scaleX(0.900);transform-origin:left center;">左手線画</div>
<div class="t" id="t48" style="left:853px;top:341.8px;font-size:10.5px;color:#f2f4f8;font-weight:normal;transform:scaleX(0.900);transform-origin:left center;">服線画</div>
<div class="t" id="t49" style="left:853px;top:359.8px;font-size:10.5px;color:#f2f4f8;font-weight:normal;transform:scaleX(0.900);transform-origin:left center;">右手線画</div>
<div class="t" id="t50" style="left:853px;top:377.8px;font-size:10.5px;color:#f2f4f8;font-weight:normal;transform:scaleX(0.900);transform-origin:left center;">服線画</div>
<div class="t" id="t51" style="left:853px;top:395.8px;font-size:10.5px;color:#f2f4f8;font-weight:normal;transform:scaleX(0.900);transform-origin:left center;">左足線画</div>
<div class="t" id="t52" style="left:853px;top:413.8px;font-size:10.5px;color:#f2f4f8;font-weight:normal;transform:scaleX(0.900);transform-origin:left center;">服線画</div>
<div class="t" id="t53" style="left:853px;top:431.8px;font-size:10.5px;color:#f2f4f8;font-weight:normal;transform:scaleX(0.900);transform-origin:left center;">右足線画</div>
<div class="t" id="t54" style="left:853px;top:449.8px;font-size:10.5px;color:#f2f4f8;font-weight:normal;transform:scaleX(0.900);transform-origin:left center;">横髪右線画</div>
<div class="t" id="t55" style="left:853px;top:467.8px;font-size:10.5px;color:#f2f4f8;font-weight:normal;transform:scaleX(0.900);transform-origin:left center;">後髪線画</div>
<div class="t" id="t56" style="left:1042px;top:508.0px;font-size:26px;color:#8e8e8e;font-weight:normal;transform:scaleX(1.037);transform-origin:left center;">ゼロ</div>
<div class="t" id="t57" style="left:1106px;top:516.0px;font-size:16px;color:#8c8c8c;font-weight:normal;transform:scaleX(1.094);transform-origin:left center;">から</div>
<div class="t" id="t58" style="left:1056px;top:539.0px;font-size:18px;color:#8c8c8c;font-weight:normal;transform:scaleX(1.000);transform-origin:left center;">はじめて</div>
<div class="t" id="t59" style="left:1128px;top:538.0px;font-size:20px;color:#8c8c8c;font-weight:bold;transform:scaleX(1.000);transform-origin:left center;">クリエイター</div>
<div class="t" id="t60" style="left:1068px;top:564.8px;font-size:10.5px;color:#8a8a8a;font-weight:normal;transform:scaleX(1.090);transform-origin:left center;">zero kara hajimete creator</div>
<div class="t" id="t61" style="right:1242px;top:655.0px;font-size:10px;color:#d8d8d8;font-weight:normal;transform:scaleX(0.702);transform-origin:right center;">フィル:</div>
<div class="t" id="t62" style="right:1242px;top:668.0px;font-size:10px;color:#d8d8d8;font-weight:normal;transform:scaleX(0.720);transform-origin:right center;">ストローク:</div>
<div class="t" id="t63" style="left:1066px;top:655.0px;font-size:10px;color:#d8d8d8;font-weight:normal;transform:scaleX(0.846);transform-origin:left center;">X:</div>
<div class="t" id="t64" style="right:170px;top:655.0px;font-size:10px;color:#e0e0e0;font-weight:normal;transform:scaleX(1.023);transform-origin:right center;">-53.02</div>
<div class="t" id="t65" style="left:1066px;top:669.0px;font-size:10px;color:#d8d8d8;font-weight:normal;transform:scaleX(0.786);transform-origin:left center;">Y:</div>
<div class="t" id="t66" style="right:170px;top:669.0px;font-size:10px;color:#e0e0e0;font-weight:normal;transform:scaleX(1.053);transform-origin:right center;">-2.69</div>
<div class="t" id="t67" style="left:1119px;top:661.8px;font-size:10.5px;color:#d8d8d8;font-weight:normal;transform:scaleX(0.856);transform-origin:left center;">Z:</div>
<div class="t" id="t68" style="left:1139px;top:661.8px;font-size:10.5px;color:#e0e0e0;font-weight:normal;transform:scaleX(0.904);transform-origin:left center;">69%</div>
<div class="t" id="t69" style="left:1197px;top:661.8px;font-size:10.5px;color:#d8d8d8;font-weight:normal;transform:scaleX(0.762);transform-origin:left center;">R:</div>
<div class="t" id="t70" style="left:1219px;top:661.8px;font-size:10.5px;color:#e0e0e0;font-weight:normal;transform:scaleX(0.974);transform-origin:left center;">0.00°</div>
<svg style="left:0;top:0" width="1280" height="720"><text x="56.9" y="634" text-anchor="middle" font-family="Liberation Sans, sans-serif" font-size="36" font-weight="bold" fill="#000" stroke="#000" stroke-width="8.5" stroke-linejoin="round">線</text><text x="98.0" y="634" text-anchor="middle" font-family="Liberation Sans, sans-serif" font-size="36" font-weight="bold" fill="#000" stroke="#000" stroke-width="8.5" stroke-linejoin="round">画</text><text x="140.7" y="634" text-anchor="middle" font-family="Liberation Sans, sans-serif" font-size="36" font-weight="bold" fill="#000" stroke="#000" stroke-width="8.5" stroke-linejoin="round">の</text><text x="183.0" y="634" text-anchor="middle" font-family="Liberation Sans, sans-serif" font-size="36" font-weight="bold" fill="#000" stroke="#000" stroke-width="8.5" stroke-linejoin="round">部</text><text x="226.5" y="634" text-anchor="middle" font-family="Liberation Sans, sans-serif" font-size="36" font-weight="bold" fill="#000" stroke="#000" stroke-width="8.5" stroke-linejoin="round">分</text><text x="268.5" y="634" text-anchor="middle" font-family="Liberation Sans, sans-serif" font-size="36" font-weight="bold" fill="#000" stroke="#000" stroke-width="8.5" stroke-linejoin="round">だ</text><text x="307.5" y="634" text-anchor="middle" font-family="Liberation Sans, sans-serif" font-size="36" font-weight="bold" fill="#000" stroke="#000" stroke-width="8.5" stroke-linejoin="round">け</text><text x="343.9" y="634" text-anchor="middle" font-family="Liberation Sans, sans-serif" font-size="36" font-weight="bold" fill="#000" stroke="#000" stroke-width="8.5" stroke-linejoin="round">が</text><text x="387.5" y="634" text-anchor="middle" font-family="Liberation Sans, sans-serif" font-size="36" font-weight="bold" fill="#000" stroke="#000" stroke-width="8.5" stroke-linejoin="round">新</text><text x="424.5" y="634" text-anchor="middle" font-family="Liberation Sans, sans-serif" font-size="36" font-weight="bold" fill="#000" stroke="#000" stroke-width="8.5" stroke-linejoin="round">し</text><text x="461.5" y="634" text-anchor="middle" font-family="Liberation Sans, sans-serif" font-size="36" font-weight="bold" fill="#000" stroke="#000" stroke-width="8.5" stroke-linejoin="round">い</text><text x="505.5" y="634" text-anchor="middle" font-family="Liberation Sans, sans-serif" font-size="36" font-weight="bold" fill="#000" stroke="#000" stroke-width="8.5" stroke-linejoin="round">フ</text><text x="532.0" y="634" text-anchor="middle" font-family="Liberation Sans, sans-serif" font-size="36" font-weight="bold" fill="#000" stroke="#000" stroke-width="8.5" stroke-linejoin="round">ァ</text><text x="566.5" y="634" text-anchor="middle" font-family="Liberation Sans, sans-serif" font-size="36" font-weight="bold" fill="#000" stroke="#000" stroke-width="8.5" stroke-linejoin="round">イ</text><text x="601.5" y="634" text-anchor="middle" font-family="Liberation Sans, sans-serif" font-size="36" font-weight="bold" fill="#000" stroke="#000" stroke-width="8.5" stroke-linejoin="round">ル</text><text x="641.5" y="634" text-anchor="middle" font-family="Liberation Sans, sans-serif" font-size="36" font-weight="bold" fill="#000" stroke="#000" stroke-width="8.5" stroke-linejoin="round">に</text><text x="683.5" y="634" text-anchor="middle" font-family="Liberation Sans, sans-serif" font-size="36" font-weight="bold" fill="#000" stroke="#000" stroke-width="8.5" stroke-linejoin="round">貼</text><text x="723.0" y="634" text-anchor="middle" font-family="Liberation Sans, sans-serif" font-size="36" font-weight="bold" fill="#000" stroke="#000" stroke-width="8.5" stroke-linejoin="round">り</text><text x="761.5" y="634" text-anchor="middle" font-family="Liberation Sans, sans-serif" font-size="36" font-weight="bold" fill="#000" stroke="#000" stroke-width="8.5" stroke-linejoin="round">付</text><text x="800.0" y="634" text-anchor="middle" font-family="Liberation Sans, sans-serif" font-size="36" font-weight="bold" fill="#000" stroke="#000" stroke-width="8.5" stroke-linejoin="round">け</text><text x="838.0" y="634" text-anchor="middle" font-family="Liberation Sans, sans-serif" font-size="36" font-weight="bold" fill="#000" stroke="#000" stroke-width="8.5" stroke-linejoin="round">ら</text><text x="874.5" y="634" text-anchor="middle" font-family="Liberation Sans, sans-serif" font-size="36" font-weight="bold" fill="#000" stroke="#000" stroke-width="8.5" stroke-linejoin="round">れ</text><text x="914.0" y="634" text-anchor="middle" font-family="Liberation Sans, sans-serif" font-size="36" font-weight="bold" fill="#000" stroke="#000" stroke-width="8.5" stroke-linejoin="round">ま</text><text x="949.0" y="634" text-anchor="middle" font-family="Liberation Sans, sans-serif" font-size="36" font-weight="bold" fill="#000" stroke="#000" stroke-width="8.5" stroke-linejoin="round">し</text><text x="985.0" y="634" text-anchor="middle" font-family="Liberation Sans, sans-serif" font-size="36" font-weight="bold" fill="#000" stroke="#000" stroke-width="8.5" stroke-linejoin="round">た</text><text x="55.8" y="679" text-anchor="middle" font-family="Liberation Sans, sans-serif" font-size="36" font-weight="bold" fill="#000" stroke="#000" stroke-width="8.5" stroke-linejoin="round">キ</text><text x="90.0" y="679" text-anchor="middle" font-family="Liberation Sans, sans-serif" font-size="36" font-weight="bold" fill="#000" stroke="#000" stroke-width="8.5" stroke-linejoin="round">ャ</text><text x="126.0" y="679" text-anchor="middle" font-family="Liberation Sans, sans-serif" font-size="36" font-weight="bold" fill="#000" stroke="#000" stroke-width="8.5" stroke-linejoin="round">ン</text><text x="165.5" y="679" text-anchor="middle" font-family="Liberation Sans, sans-serif" font-size="36" font-weight="bold" fill="#000" stroke="#000" stroke-width="8.5" stroke-linejoin="round">バ</text><text x="207.5" y="679" text-anchor="middle" font-family="Liberation Sans, sans-serif" font-size="36" font-weight="bold" fill="#000" stroke="#000" stroke-width="8.5" stroke-linejoin="round">ス</text><text x="245.7" y="679" text-anchor="middle" font-family="Liberation Sans, sans-serif" font-size="36" font-weight="bold" fill="#000" stroke="#000" stroke-width="8.5" stroke-linejoin="round">上</text><text x="287.0" y="679" text-anchor="middle" font-family="Liberation Sans, sans-serif" font-size="36" font-weight="bold" fill="#000" stroke="#000" stroke-width="8.5" stroke-linejoin="round">の</text><text x="329.0" y="679" text-anchor="middle" font-family="Liberation Sans, sans-serif" font-size="36" font-weight="bold" fill="#000" stroke="#000" stroke-width="8.5" stroke-linejoin="round">何</text><text x="368.1" y="679" text-anchor="middle" font-family="Liberation Sans, sans-serif" font-size="36" font-weight="bold" fill="#000" stroke="#000" stroke-width="8.5" stroke-linejoin="round">も</text><text x="406.5" y="679" text-anchor="middle" font-family="Liberation Sans, sans-serif" font-size="36" font-weight="bold" fill="#000" stroke="#000" stroke-width="8.5" stroke-linejoin="round">な</text><text x="445.5" y="679" text-anchor="middle" font-family="Liberation Sans, sans-serif" font-size="36" font-weight="bold" fill="#000" stroke="#000" stroke-width="8.5" stroke-linejoin="round">い</text><text x="489.0" y="679" text-anchor="middle" font-family="Liberation Sans, sans-serif" font-size="36" font-weight="bold" fill="#000" stroke="#000" stroke-width="8.5" stroke-linejoin="round">部</text><text x="530.5" y="679" text-anchor="middle" font-family="Liberation Sans, sans-serif" font-size="36" font-weight="bold" fill="#000" stroke="#000" stroke-width="8.5" stroke-linejoin="round">分</text><text x="572.0" y="679" text-anchor="middle" font-family="Liberation Sans, sans-serif" font-size="36" font-weight="bold" fill="#000" stroke="#000" stroke-width="8.5" stroke-linejoin="round">を</text><text x="610.7" y="679" text-anchor="middle" font-family="Liberation Sans, sans-serif" font-size="36" font-weight="bold" fill="#000" stroke="#000" stroke-width="8.5" stroke-linejoin="round">ク</text><text x="645.0" y="679" text-anchor="middle" font-family="Liberation Sans, sans-serif" font-size="36" font-weight="bold" fill="#000" stroke="#000" stroke-width="8.5" stroke-linejoin="round">リ</text><text x="675.0" y="679" text-anchor="middle" font-family="Liberation Sans, sans-serif" font-size="36" font-weight="bold" fill="#000" stroke="#000" stroke-width="8.5" stroke-linejoin="round">ッ</text><text x="707.7" y="679" text-anchor="middle" font-family="Liberation Sans, sans-serif" font-size="36" font-weight="bold" fill="#000" stroke="#000" stroke-width="8.5" stroke-linejoin="round">ク</text><text x="742.0" y="679" text-anchor="middle" font-family="Liberation Sans, sans-serif" font-size="36" font-weight="bold" fill="#000" stroke="#000" stroke-width="8.5" stroke-linejoin="round">し</text><text x="777.0" y="679" text-anchor="middle" font-family="Liberation Sans, sans-serif" font-size="36" font-weight="bold" fill="#000" stroke="#000" stroke-width="8.5" stroke-linejoin="round">て</text><text x="815.5" y="679" text-anchor="middle" font-family="Liberation Sans, sans-serif" font-size="36" font-weight="bold" fill="#000" stroke="#000" stroke-width="8.5" stroke-linejoin="round">選</text><text x="857.0" y="679" text-anchor="middle" font-family="Liberation Sans, sans-serif" font-size="36" font-weight="bold" fill="#000" stroke="#000" stroke-width="8.5" stroke-linejoin="round">択</text><text x="898.1" y="679" text-anchor="middle" font-family="Liberation Sans, sans-serif" font-size="36" font-weight="bold" fill="#000" stroke="#000" stroke-width="8.5" stroke-linejoin="round">解</text><text x="938.9" y="679" text-anchor="middle" font-family="Liberation Sans, sans-serif" font-size="36" font-weight="bold" fill="#000" stroke="#000" stroke-width="8.5" stroke-linejoin="round">除</text><text x="975.4" y="679" text-anchor="middle" font-family="Liberation Sans, sans-serif" font-size="36" font-weight="bold" fill="#000" stroke="#000" stroke-width="8.5" stroke-linejoin="round">し</text><text x="1010.5" y="679" text-anchor="middle" font-family="Liberation Sans, sans-serif" font-size="36" font-weight="bold" fill="#000" stroke="#000" stroke-width="8.5" stroke-linejoin="round">ま</text><text x="1047.0" y="679" text-anchor="middle" font-family="Liberation Sans, sans-serif" font-size="36" font-weight="bold" fill="#000" stroke="#000" stroke-width="8.5" stroke-linejoin="round">す</text><text x="56.9" y="634" text-anchor="middle" font-family="Liberation Sans, sans-serif" font-size="36" font-weight="bold" fill="#fff" stroke="#fff" stroke-width="1.0" stroke-linejoin="round">線</text><text x="98.0" y="634" text-anchor="middle" font-family="Liberation Sans, sans-serif" font-size="36" font-weight="bold" fill="#fff" stroke="#fff" stroke-width="1.0" stroke-linejoin="round">画</text><text x="140.7" y="634" text-anchor="middle" font-family="Liberation Sans, sans-serif" font-size="36" font-weight="bold" fill="#fff" stroke="#fff" stroke-width="1.0" stroke-linejoin="round">の</text><text x="183.0" y="634" text-anchor="middle" font-family="Liberation Sans, sans-serif" font-size="36" font-weight="bold" fill="#fff" stroke="#fff" stroke-width="1.0" stroke-linejoin="round">部</text><text x="226.5" y="634" text-anchor="middle" font-family="Liberation Sans, sans-serif" font-size="36" font-weight="bold" fill="#fff" stroke="#fff" stroke-width="1.0" stroke-linejoin="round">分</text><text x="268.5" y="634" text-anchor="middle" font-family="Liberation Sans, sans-serif" font-size="36" font-weight="bold" fill="#fff" stroke="#fff" stroke-width="1.0" stroke-linejoin="round">だ</text><text x="307.5" y="634" text-anchor="middle" font-family="Liberation Sans, sans-serif" font-size="36" font-weight="bold" fill="#fff" stroke="#fff" stroke-width="1.0" stroke-linejoin="round">け</text><text x="343.9" y="634" text-anchor="middle" font-family="Liberation Sans, sans-serif" font-size="36" font-weight="bold" fill="#fff" stroke="#fff" stroke-width="1.0" stroke-linejoin="round">が</text><text x="387.5" y="634" text-anchor="middle" font-family="Liberation Sans, sans-serif" font-size="36" font-weight="bold" fill="#fff" stroke="#fff" stroke-width="1.0" stroke-linejoin="round">新</text><text x="424.5" y="634" text-anchor="middle" font-family="Liberation Sans, sans-serif" font-size="36" font-weight="bold" fill="#fff" stroke="#fff" stroke-width="1.0" stroke-linejoin="round">し</text><text x="461.5" y="634" text-anchor="middle" font-family="Liberation Sans, sans-serif" font-size="36" font-weight="bold" fill="#fff" stroke="#fff" stroke-width="1.0" stroke-linejoin="round">い</text><text x="505.5" y="634" text-anchor="middle" font-family="Liberation Sans, sans-serif" font-size="36" font-weight="bold" fill="#fff" stroke="#fff" stroke-width="1.0" stroke-linejoin="round">フ</text><text x="532.0" y="634" text-anchor="middle" font-family="Liberation Sans, sans-serif" font-size="36" font-weight="bold" fill="#fff" stroke="#fff" stroke-width="1.0" stroke-linejoin="round">ァ</text><text x="566.5" y="634" text-anchor="middle" font-family="Liberation Sans, sans-serif" font-size="36" font-weight="bold" fill="#fff" stroke="#fff" stroke-width="1.0" stroke-linejoin="round">イ</text><text x="601.5" y="634" text-anchor="middle" font-family="Liberation Sans, sans-serif" font-size="36" font-weight="bold" fill="#fff" stroke="#fff" stroke-width="1.0" stroke-linejoin="round">ル</text><text x="641.5" y="634" text-anchor="middle" font-family="Liberation Sans, sans-serif" font-size="36" font-weight="bold" fill="#fff" stroke="#fff" stroke-width="1.0" stroke-linejoin="round">に</text><text x="683.5" y="634" text-anchor="middle" font-family="Liberation Sans, sans-serif" font-size="36" font-weight="bold" fill="#fff" stroke="#fff" stroke-width="1.0" stroke-linejoin="round">貼</text><text x="723.0" y="634" text-anchor="middle" font-family="Liberation Sans, sans-serif" font-size="36" font-weight="bold" fill="#fff" stroke="#fff" stroke-width="1.0" stroke-linejoin="round">り</text><text x="761.5" y="634" text-anchor="middle" font-family="Liberation Sans, sans-serif" font-size="36" font-weight="bold" fill="#fff" stroke="#fff" stroke-width="1.0" stroke-linejoin="round">付</text><text x="800.0" y="634" text-anchor="middle" font-family="Liberation Sans, sans-serif" font-size="36" font-weight="bold" fill="#fff" stroke="#fff" stroke-width="1.0" stroke-linejoin="round">け</text><text x="838.0" y="634" text-anchor="middle" font-family="Liberation Sans, sans-serif" font-size="36" font-weight="bold" fill="#fff" stroke="#fff" stroke-width="1.0" stroke-linejoin="round">ら</text><text x="874.5" y="634" text-anchor="middle" font-family="Liberation Sans, sans-serif" font-size="36" font-weight="bold" fill="#fff" stroke="#fff" stroke-width="1.0" stroke-linejoin="round">れ</text><text x="914.0" y="634" text-anchor="middle" font-family="Liberation Sans, sans-serif" font-size="36" font-weight="bold" fill="#fff" stroke="#fff" stroke-width="1.0" stroke-linejoin="round">ま</text><text x="949.0" y="634" text-anchor="middle" font-family="Liberation Sans, sans-serif" font-size="36" font-weight="bold" fill="#fff" stroke="#fff" stroke-width="1.0" stroke-linejoin="round">し</text><text x="985.0" y="634" text-anchor="middle" font-family="Liberation Sans, sans-serif" font-size="36" font-weight="bold" fill="#fff" stroke="#fff" stroke-width="1.0" stroke-linejoin="round">た</text><text x="55.8" y="679" text-anchor="middle" font-family="Liberation Sans, sans-serif" font-size="36" font-weight="bold" fill="#fff" stroke="#fff" stroke-width="1.0" stroke-linejoin="round">キ</text><text x="90.0" y="679" text-anchor="middle" font-family="Liberation Sans, sans-serif" font-size="36" font-weight="bold" fill="#fff" stroke="#fff" stroke-width="1.0" stroke-linejoin="round">ャ</text><text x="126.0" y="679" text-anchor="middle" font-family="Liberation Sans, sans-serif" font-size="36" font-weight="bold" fill="#fff" stroke="#fff" stroke-width="1.0" stroke-linejoin="round">ン</text><text x="165.5" y="679" text-anchor="middle" font-family="Liberation Sans, sans-serif" font-size="36" font-weight="bold" fill="#fff" stroke="#fff" stroke-width="1.0" stroke-linejoin="round">バ</text><text x="207.5" y="679" text-anchor="middle" font-family="Liberation Sans, sans-serif" font-size="36" font-weight="bold" fill="#fff" stroke="#fff" stroke-width="1.0" stroke-linejoin="round">ス</text><text x="245.7" y="679" text-anchor="middle" font-family="Liberation Sans, sans-serif" font-size="36" font-weight="bold" fill="#fff" stroke="#fff" stroke-width="1.0" stroke-linejoin="round">上</text><text x="287.0" y="679" text-anchor="middle" font-family="Liberation Sans, sans-serif" font-size="36" font-weight="bold" fill="#fff" stroke="#fff" stroke-width="1.0" stroke-linejoin="round">の</text><text x="329.0" y="679" text-anchor="middle" font-family="Liberation Sans, sans-serif" font-size="36" font-weight="bold" fill="#fff" stroke="#fff" stroke-width="1.0" stroke-linejoin="round">何</text><text x="368.1" y="679" text-anchor="middle" font-family="Liberation Sans, sans-serif" font-size="36" font-weight="bold" fill="#fff" stroke="#fff" stroke-width="1.0" stroke-linejoin="round">も</text><text x="406.5" y="679" text-anchor="middle" font-family="Liberation Sans, sans-serif" font-size="36" font-weight="bold" fill="#fff" stroke="#fff" stroke-width="1.0" stroke-linejoin="round">な</text><text x="445.5" y="679" text-anchor="middle" font-family="Liberation Sans, sans-serif" font-size="36" font-weight="bold" fill="#fff" stroke="#fff" stroke-width="1.0" stroke-linejoin="round">い</text><text x="489.0" y="679" text-anchor="middle" font-family="Liberation Sans, sans-serif" font-size="36" font-weight="bold" fill="#fff" stroke="#fff" stroke-width="1.0" stroke-linejoin="round">部</text><text x="530.5" y="679" text-anchor="middle" font-family="Liberation Sans, sans-serif" font-size="36" font-weight="bold" fill="#fff" stroke="#fff" stroke-width="1.0" stroke-linejoin="round">分</text><text x="572.0" y="679" text-anchor="middle" font-family="Liberation Sans, sans-serif" font-size="36" font-weight="bold" fill="#fff" stroke="#fff" stroke-width="1.0" stroke-linejoin="round">を</text><text x="610.7" y="679" text-anchor="middle" font-family="Liberation Sans, sans-serif" font-size="36" font-weight="bold" fill="#fff" stroke="#fff" stroke-width="1.0" stroke-linejoin="round">ク</text><text x="645.0" y="679" text-anchor="middle" font-family="Liberation Sans, sans-serif" font-size="36" font-weight="bold" fill="#fff" stroke="#fff" stroke-width="1.0" stroke-linejoin="round">リ</text><text x="675.0" y="679" text-anchor="middle" font-family="Liberation Sans, sans-serif" font-size="36" font-weight="bold" fill="#fff" stroke="#fff" stroke-width="1.0" stroke-linejoin="round">ッ</text><text x="707.7" y="679" text-anchor="middle" font-family="Liberation Sans, sans-serif" font-size="36" font-weight="bold" fill="#fff" stroke="#fff" stroke-width="1.0" stroke-linejoin="round">ク</text><text x="742.0" y="679" text-anchor="middle" font-family="Liberation Sans, sans-serif" font-size="36" font-weight="bold" fill="#fff" stroke="#fff" stroke-width="1.0" stroke-linejoin="round">し</text><text x="777.0" y="679" text-anchor="middle" font-family="Liberation Sans, sans-serif" font-size="36" font-weight="bold" fill="#fff" stroke="#fff" stroke-width="1.0" stroke-linejoin="round">て</text><text x="815.5" y="679" text-anchor="middle" font-family="Liberation Sans, sans-serif" font-size="36" font-weight="bold" fill="#fff" stroke="#fff" stroke-width="1.0" stroke-linejoin="round">選</text><text x="857.0" y="679" text-anchor="middle" font-family="Liberation Sans, sans-serif" font-size="36" font-weight="bold" fill="#fff" stroke="#fff" stroke-width="1.0" stroke-linejoin="round">択</text><text x="898.1" y="679" text-anchor="middle" font-family="Liberation Sans, sans-serif" font-size="36" font-weight="bold" fill="#fff" stroke="#fff" stroke-width="1.0" stroke-linejoin="round">解</text><text x="938.9" y="679" text-anchor="middle" font-family="Liberation Sans, sans-serif" font-size="36" font-weight="bold" fill="#fff" stroke="#fff" stroke-width="1.0" stroke-linejoin="round">除</text><text x="975.4" y="679" text-anchor="middle" font-family="Liberation Sans, sans-serif" font-size="36" font-weight="bold" fill="#fff" stroke="#fff" stroke-width="1.0" stroke-linejoin="round">し</text><text x="1010.5" y="679" text-anchor="middle" font-family="Liberation Sans, sans-serif" font-size="36" font-weight="bold" fill="#fff" stroke="#fff" stroke-width="1.0" stroke-linejoin="round">ま</text><text x="1047.0" y="679" text-anchor="middle" font-family="Liberation Sans, sans-serif" font-size="36" font-weight="bold" fill="#fff" stroke="#fff" stroke-width="1.0" stroke-linejoin="round">す</text><circle cx="1011.5" cy="633.5" r="9.6" fill="#000"/><circle cx="1011.5" cy="633.5" r="6.6" fill="#fff"/><circle cx="1011.5" cy="633.5" r="2.3" fill="#000"/><circle cx="1075.2" cy="678.7" r="9.6" fill="#000"/><circle cx="1075.2" cy="678.7" r="6.6" fill="#fff"/><circle cx="1075.2" cy="678.7" r="2.3" fill="#000"/></svg>
</body></html>
